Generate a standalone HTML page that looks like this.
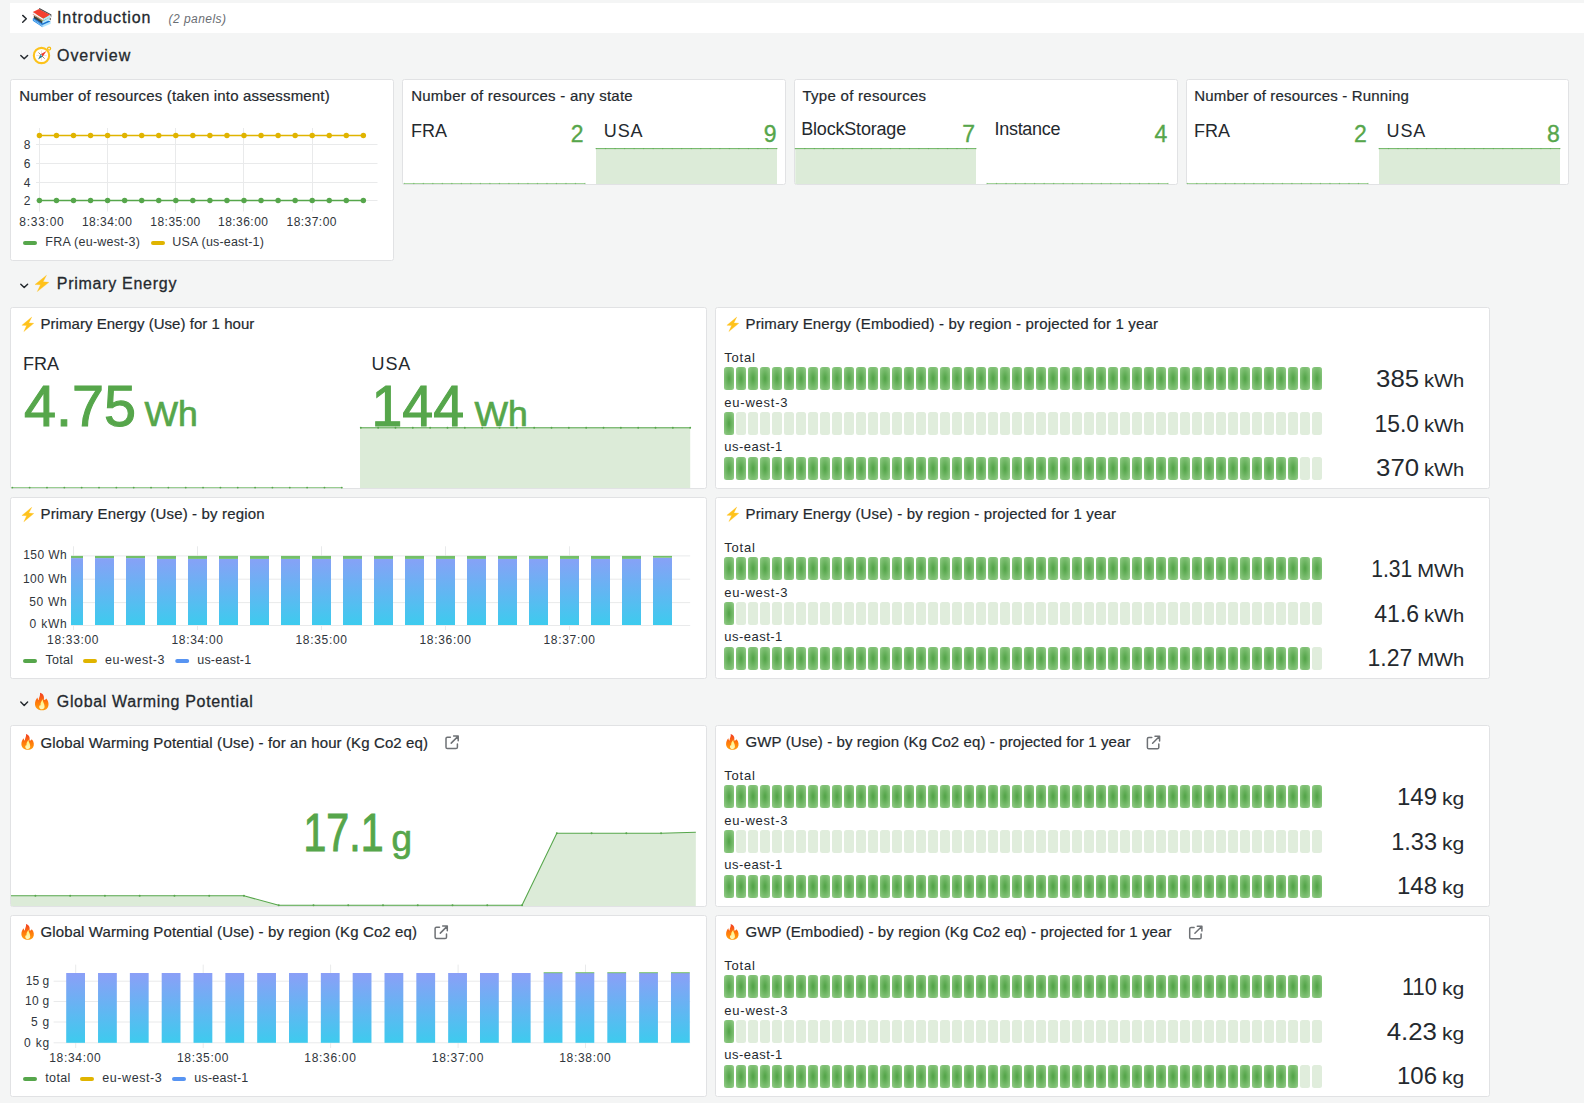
<!DOCTYPE html>
<html><head><meta charset="utf-8"><title>Dashboard</title>
<style>
html,body{margin:0;padding:0;background:#f4f5f5;width:1584px;height:1103px;overflow:hidden}
svg{display:block}
text{font-family:"Liberation Sans",sans-serif}
</style></head><body>
<svg width="1584" height="1103" viewBox="0 0 1584 1103">
<defs>
<linearGradient id="gbar" x1="0" y1="555" x2="0" y2="625" gradientUnits="userSpaceOnUse"><stop offset="0" stop-color="#8b9ff7"/><stop offset="1" stop-color="#3dcbee"/></linearGradient>
<linearGradient id="gbar2" x1="0" y1="973" x2="0" y2="1043" gradientUnits="userSpaceOnUse"><stop offset="0" stop-color="#8b9ff7"/><stop offset="1" stop-color="#3dcbee"/></linearGradient>
<radialGradient id="glit" cx="0.5" cy="0.5" r="0.6"><stop offset="0.1" stop-color="#56a64b"/><stop offset="1" stop-color="#8cc881"/></radialGradient>
<linearGradient id="gfire" x1="0" y1="0" x2="0" y2="1"><stop offset="0" stop-color="#f23d22"/><stop offset="0.55" stop-color="#ff7a0a"/><stop offset="1" stop-color="#ffa10f"/></linearGradient>
<linearGradient id="gflame" x1="0" y1="0" x2="0" y2="1"><stop offset="0" stop-color="#fff36e"/><stop offset="1" stop-color="#fff7c4"/></linearGradient>
<clipPath id="clipPE"><rect x="71" y="540" width="625" height="100"/></clipPath>
</defs>
<rect x="0" y="0" width="1584" height="1103" fill="#f4f5f5"/>
<rect x="10" y="3" width="1574" height="30" fill="#fff"/>
<path d="M22.7 15.4 L26.3 18.8 L22.7 22.2" fill="none" stroke="#24292e" stroke-width="1.45" stroke-linecap="round" stroke-linejoin="round"/>
<path d="M32.80 18.40 L42.60 24.90 L42.60 27.20 L32.80 20.70Z" fill="#1e88e5"/>
<path d="M33.40 19.40 L42.60 25.90 L42.60 26.40 L33.40 19.90Z" fill="#e3f2fd"/>
<path d="M42.60 24.90 L50.60 21.40 L50.60 23.70 L42.60 27.20Z" fill="#b3e5fc"/>
<path d="M32.80 18.40 L39.00 16.00 L50.60 21.40 L42.60 24.90Z" fill="#1976d2"/>
<path d="M33.80 15.60 L42.40 21.20 L42.40 23.50 L33.80 17.90Z" fill="#3d3d3d"/>
<path d="M42.40 21.20 L49.80 17.60 L49.80 19.90 L42.40 23.50Z" fill="#b3e5fc"/>
<path d="M33.80 15.60 L40.00 13.00 L49.80 17.60 L42.40 21.20Z" fill="#7cb342"/>
<path d="M49.80 17.60 L50.70 18.00 L50.70 20.30 L49.80 19.90Z" fill="#3d3d3d"/>
<path d="M32.80 12.10 L43.20 18.40 L43.20 20.70 L32.80 14.40Z" fill="#f5f5f5"/>
<path d="M32.80 13.90 L43.20 20.20 L43.20 20.70 L32.80 14.40Z" fill="#e53935"/>
<path d="M43.20 18.40 L50.20 14.80 L50.20 17.10 L43.20 20.70Z" fill="#b3e5fc"/>
<path d="M32.80 12.10 L39.00 9.00 L50.20 14.80 L43.20 18.40Z" fill="#f4402f"/>
<path d="M39.00 9.00 L39.40 8.10 L51.40 14.50 L51.20 17.40 L50.20 14.80Z" fill="#3d3d3d"/>
<text x="57" y="23" font-size="16" fill="#24292e" textLength="93.5" lengthAdjust="spacing" stroke="#24292e" stroke-width="0.3">Introduction</text>
<text x="168.5" y="23" font-size="12" fill="#6a6e73" font-style="italic" textLength="57.5" lengthAdjust="spacing">(2 panels)</text>
<path d="M20.8 55.4 L24.2 58.8 L27.6 55.4" fill="none" stroke="#24292e" stroke-width="1.45" stroke-linecap="round" stroke-linejoin="round"/>
<circle cx="49.1" cy="48.6" r="1.55" fill="none" stroke="#f7bc10" stroke-width="1.2"/>
<circle cx="41.5" cy="55.5" r="7.65" fill="#fff" stroke="#fcc21b" stroke-width="2.1"/>
<path d="M41.5 50.3 L41.5 60.7 M36.3 55.5 L46.7 55.5" stroke="#efd2bb" stroke-width="0.6"/>
<path d="M38.5 52.5 L44.7 58.7" stroke="#a88366" stroke-width="0.9"/>
<path d="M46.5 50.9 L42.7 56.4 L40.6 54.3 Z" fill="#f23a2a"/>
<path d="M38.1 59.5 L40.6 54.3 L42.7 56.4 Z" fill="#207a8f"/>
<circle cx="41.3" cy="55.4" r="0.8" fill="#8fd6ea"/>
<text x="57" y="60.6" font-size="16" fill="#24292e" textLength="73.2" lengthAdjust="spacing" stroke="#24292e" stroke-width="0.3">Overview</text>
<path d="M20.8 284.2 L24.2 287.59999999999997 L27.6 284.2" fill="none" stroke="#24292e" stroke-width="1.45" stroke-linecap="round" stroke-linejoin="round"/>
<path d="M46.50 275.30 L35.00 284.50 L40.50 284.80 L37.30 291.60 L48.90 282.30 L43.10 281.80Z" fill="#ffc21c" stroke="#ffbf10" stroke-width="0.3" stroke-linejoin="round"/>
<text x="56.8" y="289.4" font-size="16" fill="#24292e" textLength="119.6" lengthAdjust="spacing" stroke="#24292e" stroke-width="0.3">Primary Energy</text>
<path d="M20.8 702.1 L24.2 705.5 L27.6 702.1" fill="none" stroke="#24292e" stroke-width="1.45" stroke-linecap="round" stroke-linejoin="round"/>
<path d="M 40.00,692.80 C 43.50,693.77 44.50,696.69 43.80,699.90 C 44.60,700.19 45.60,699.80 46.20,698.54 C 48.60,700.97 49.30,705.05 47.60,707.77 C 46.40,709.72 44.30,710.30 42.00,710.30 C 38.50,710.30 35.30,708.36 35.00,704.47 C 34.80,701.55 36.00,699.12 37.40,697.47 C 37.60,698.63 37.90,699.61 38.60,700.19 C 38.80,697.47 40.60,695.52 40.00,692.80 Z" fill="url(#gfire)"/>
<path d="M 42.80,699.22 C 42.40,701.55 44.60,703.49 44.60,706.61 C 44.60,708.55 43.40,709.33 42.00,709.33 C 40.20,709.33 39.00,708.36 39.20,706.22 C 39.40,705.44 40.00,705.05 40.60,705.44 C 40.00,703.49 41.60,700.58 42.80,699.22 Z" fill="url(#gflame)"/>
<text x="56.8" y="707.3" font-size="16" fill="#24292e" textLength="196" lengthAdjust="spacing" stroke="#24292e" stroke-width="0.3">Global Warming Potential</text>
<rect x="10.5" y="79.5" width="383" height="181" rx="2" fill="#fff" stroke="#e1e2e4" stroke-width="1"/>
<text x="19.2" y="100.6" font-size="15" fill="#24292e" textLength="310.5" lengthAdjust="spacing" stroke="#24292e" stroke-width="0.2">Number of resources (taken into assessment)</text>
<line x1="36" y1="144.5" x2="377.5" y2="144.5" stroke="#e9eaeb" stroke-width="1"/>
<line x1="36" y1="163.5" x2="377.5" y2="163.5" stroke="#e9eaeb" stroke-width="1"/>
<line x1="36" y1="182.5" x2="377.5" y2="182.5" stroke="#e9eaeb" stroke-width="1"/>
<line x1="36" y1="200.5" x2="377.5" y2="200.5" stroke="#e9eaeb" stroke-width="1"/>
<line x1="39.5" y1="128" x2="39.5" y2="211.5" stroke="#e9eaeb" stroke-width="1"/>
<line x1="107.5" y1="128" x2="107.5" y2="211.5" stroke="#e9eaeb" stroke-width="1"/>
<line x1="175.5" y1="128" x2="175.5" y2="211.5" stroke="#e9eaeb" stroke-width="1"/>
<line x1="243.5" y1="128" x2="243.5" y2="211.5" stroke="#e9eaeb" stroke-width="1"/>
<line x1="312.5" y1="128" x2="312.5" y2="211.5" stroke="#e9eaeb" stroke-width="1"/>
<text x="30.5" y="148.70000000000002" font-size="12" fill="#30353b" text-anchor="end">8</text>
<text x="30.5" y="167.8" font-size="12" fill="#30353b" text-anchor="end">6</text>
<text x="30.5" y="186.60000000000002" font-size="12" fill="#30353b" text-anchor="end">4</text>
<text x="30.5" y="204.70000000000002" font-size="12" fill="#30353b" text-anchor="end">2</text>
<text x="19.3" y="225.7" font-size="12" fill="#30353b" textLength="44.5" lengthAdjust="spacing">8:33:00</text>
<text x="106.9" y="225.7" font-size="12" fill="#30353b" text-anchor="middle" textLength="50" lengthAdjust="spacing">18:34:00</text>
<text x="175.3" y="225.7" font-size="12" fill="#30353b" text-anchor="middle" textLength="50" lengthAdjust="spacing">18:35:00</text>
<text x="243.0" y="225.7" font-size="12" fill="#30353b" text-anchor="middle" textLength="50" lengthAdjust="spacing">18:36:00</text>
<text x="311.5" y="225.7" font-size="12" fill="#30353b" text-anchor="middle" textLength="50" lengthAdjust="spacing">18:37:00</text>
<line x1="39.4" y1="135.5" x2="363.5" y2="135.5" stroke="#e0b400" stroke-width="1.5"/>
<circle cx="39.40" cy="135.5" r="2.7" fill="#e0b400"/>
<circle cx="56.45" cy="135.5" r="2.7" fill="#e0b400"/>
<circle cx="73.50" cy="135.5" r="2.7" fill="#e0b400"/>
<circle cx="90.55" cy="135.5" r="2.7" fill="#e0b400"/>
<circle cx="107.60" cy="135.5" r="2.7" fill="#e0b400"/>
<circle cx="124.65" cy="135.5" r="2.7" fill="#e0b400"/>
<circle cx="141.70" cy="135.5" r="2.7" fill="#e0b400"/>
<circle cx="158.75" cy="135.5" r="2.7" fill="#e0b400"/>
<circle cx="175.80" cy="135.5" r="2.7" fill="#e0b400"/>
<circle cx="192.85" cy="135.5" r="2.7" fill="#e0b400"/>
<circle cx="209.90" cy="135.5" r="2.7" fill="#e0b400"/>
<circle cx="226.95" cy="135.5" r="2.7" fill="#e0b400"/>
<circle cx="244.00" cy="135.5" r="2.7" fill="#e0b400"/>
<circle cx="261.05" cy="135.5" r="2.7" fill="#e0b400"/>
<circle cx="278.10" cy="135.5" r="2.7" fill="#e0b400"/>
<circle cx="295.15" cy="135.5" r="2.7" fill="#e0b400"/>
<circle cx="312.20" cy="135.5" r="2.7" fill="#e0b400"/>
<circle cx="329.25" cy="135.5" r="2.7" fill="#e0b400"/>
<circle cx="346.30" cy="135.5" r="2.7" fill="#e0b400"/>
<circle cx="363.35" cy="135.5" r="2.7" fill="#e0b400"/>
<line x1="39.4" y1="200.5" x2="363.5" y2="200.5" stroke="#56a64b" stroke-width="1.5"/>
<circle cx="39.40" cy="200.5" r="2.7" fill="#56a64b"/>
<circle cx="56.45" cy="200.5" r="2.7" fill="#56a64b"/>
<circle cx="73.50" cy="200.5" r="2.7" fill="#56a64b"/>
<circle cx="90.55" cy="200.5" r="2.7" fill="#56a64b"/>
<circle cx="107.60" cy="200.5" r="2.7" fill="#56a64b"/>
<circle cx="124.65" cy="200.5" r="2.7" fill="#56a64b"/>
<circle cx="141.70" cy="200.5" r="2.7" fill="#56a64b"/>
<circle cx="158.75" cy="200.5" r="2.7" fill="#56a64b"/>
<circle cx="175.80" cy="200.5" r="2.7" fill="#56a64b"/>
<circle cx="192.85" cy="200.5" r="2.7" fill="#56a64b"/>
<circle cx="209.90" cy="200.5" r="2.7" fill="#56a64b"/>
<circle cx="226.95" cy="200.5" r="2.7" fill="#56a64b"/>
<circle cx="244.00" cy="200.5" r="2.7" fill="#56a64b"/>
<circle cx="261.05" cy="200.5" r="2.7" fill="#56a64b"/>
<circle cx="278.10" cy="200.5" r="2.7" fill="#56a64b"/>
<circle cx="295.15" cy="200.5" r="2.7" fill="#56a64b"/>
<circle cx="312.20" cy="200.5" r="2.7" fill="#56a64b"/>
<circle cx="329.25" cy="200.5" r="2.7" fill="#56a64b"/>
<circle cx="346.30" cy="200.5" r="2.7" fill="#56a64b"/>
<circle cx="363.35" cy="200.5" r="2.7" fill="#56a64b"/>
<rect x="23" y="241" width="14" height="4" fill="#56a64b" rx="2"/>
<text x="45.3" y="245.8" font-size="12.5" fill="#30353b" textLength="94.5" lengthAdjust="spacing">FRA (eu-west-3)</text>
<rect x="151" y="241" width="14" height="4" fill="#e0b400" rx="2"/>
<text x="172.3" y="245.8" font-size="12.5" fill="#30353b" textLength="91.5" lengthAdjust="spacing">USA (us-east-1)</text>
<rect x="402.5" y="79.5" width="383" height="105" rx="2" fill="#fff" stroke="#e1e2e4" stroke-width="1"/>
<text x="411.2" y="100.6" font-size="15" fill="#24292e" textLength="221.5" lengthAdjust="spacing" stroke="#24292e" stroke-width="0.2">Number of resources - any state</text>
<line x1="404.3" y1="183.5" x2="585" y2="183.5" stroke="#a3d39a" stroke-width="1"/>
<circle cx="404.30" cy="183.5" r="0.7" fill="#56a64b" fill-opacity="0.5"/>
<circle cx="413.81" cy="183.5" r="0.7" fill="#56a64b" fill-opacity="0.5"/>
<circle cx="423.32" cy="183.5" r="0.7" fill="#56a64b" fill-opacity="0.5"/>
<circle cx="432.83" cy="183.5" r="0.7" fill="#56a64b" fill-opacity="0.5"/>
<circle cx="442.34" cy="183.5" r="0.7" fill="#56a64b" fill-opacity="0.5"/>
<circle cx="451.85" cy="183.5" r="0.7" fill="#56a64b" fill-opacity="0.5"/>
<circle cx="461.36" cy="183.5" r="0.7" fill="#56a64b" fill-opacity="0.5"/>
<circle cx="470.87" cy="183.5" r="0.7" fill="#56a64b" fill-opacity="0.5"/>
<circle cx="480.38" cy="183.5" r="0.7" fill="#56a64b" fill-opacity="0.5"/>
<circle cx="489.89" cy="183.5" r="0.7" fill="#56a64b" fill-opacity="0.5"/>
<circle cx="499.41" cy="183.5" r="0.7" fill="#56a64b" fill-opacity="0.5"/>
<circle cx="508.92" cy="183.5" r="0.7" fill="#56a64b" fill-opacity="0.5"/>
<circle cx="518.43" cy="183.5" r="0.7" fill="#56a64b" fill-opacity="0.5"/>
<circle cx="527.94" cy="183.5" r="0.7" fill="#56a64b" fill-opacity="0.5"/>
<circle cx="537.45" cy="183.5" r="0.7" fill="#56a64b" fill-opacity="0.5"/>
<circle cx="546.96" cy="183.5" r="0.7" fill="#56a64b" fill-opacity="0.5"/>
<circle cx="556.47" cy="183.5" r="0.7" fill="#56a64b" fill-opacity="0.5"/>
<circle cx="565.98" cy="183.5" r="0.7" fill="#56a64b" fill-opacity="0.5"/>
<circle cx="575.49" cy="183.5" r="0.7" fill="#56a64b" fill-opacity="0.5"/>
<circle cx="585.00" cy="183.5" r="0.7" fill="#56a64b" fill-opacity="0.5"/>
<rect x="596" y="148.2" width="181" height="35.80000000000001" fill="#dcebd8"/>
<line x1="596" y1="148.6" x2="777" y2="148.6" stroke="#6fb565" stroke-width="1"/>
<circle cx="596.00" cy="148.6" r="0.7" fill="#56a64b" fill-opacity="0.6"/>
<circle cx="605.53" cy="148.6" r="0.7" fill="#56a64b" fill-opacity="0.6"/>
<circle cx="615.05" cy="148.6" r="0.7" fill="#56a64b" fill-opacity="0.6"/>
<circle cx="624.58" cy="148.6" r="0.7" fill="#56a64b" fill-opacity="0.6"/>
<circle cx="634.11" cy="148.6" r="0.7" fill="#56a64b" fill-opacity="0.6"/>
<circle cx="643.63" cy="148.6" r="0.7" fill="#56a64b" fill-opacity="0.6"/>
<circle cx="653.16" cy="148.6" r="0.7" fill="#56a64b" fill-opacity="0.6"/>
<circle cx="662.68" cy="148.6" r="0.7" fill="#56a64b" fill-opacity="0.6"/>
<circle cx="672.21" cy="148.6" r="0.7" fill="#56a64b" fill-opacity="0.6"/>
<circle cx="681.74" cy="148.6" r="0.7" fill="#56a64b" fill-opacity="0.6"/>
<circle cx="691.26" cy="148.6" r="0.7" fill="#56a64b" fill-opacity="0.6"/>
<circle cx="700.79" cy="148.6" r="0.7" fill="#56a64b" fill-opacity="0.6"/>
<circle cx="710.32" cy="148.6" r="0.7" fill="#56a64b" fill-opacity="0.6"/>
<circle cx="719.84" cy="148.6" r="0.7" fill="#56a64b" fill-opacity="0.6"/>
<circle cx="729.37" cy="148.6" r="0.7" fill="#56a64b" fill-opacity="0.6"/>
<circle cx="738.89" cy="148.6" r="0.7" fill="#56a64b" fill-opacity="0.6"/>
<circle cx="748.42" cy="148.6" r="0.7" fill="#56a64b" fill-opacity="0.6"/>
<circle cx="757.95" cy="148.6" r="0.7" fill="#56a64b" fill-opacity="0.6"/>
<circle cx="767.47" cy="148.6" r="0.7" fill="#56a64b" fill-opacity="0.6"/>
<circle cx="777.00" cy="148.6" r="0.7" fill="#56a64b" fill-opacity="0.6"/>
<text x="411.0" y="136.9" font-size="18" fill="#24292e">FRA</text>
<text x="583.5" y="142" font-size="23" fill="#56a64b" text-anchor="end" stroke="#56a64b" stroke-width="0.35">2</text>
<text x="603.8" y="136.9" font-size="18" fill="#24292e" textLength="38.8" lengthAdjust="spacing">USA</text>
<text x="776.5" y="142" font-size="23" fill="#56a64b" text-anchor="end" stroke="#56a64b" stroke-width="0.35">9</text>
<rect x="794.5" y="79.5" width="383" height="105" rx="2" fill="#fff" stroke="#e1e2e4" stroke-width="1"/>
<text x="802.5" y="100.6" font-size="15" fill="#24292e" textLength="123.5" lengthAdjust="spacing" stroke="#24292e" stroke-width="0.2">Type of resources</text>
<rect x="795.3" y="148.2" width="180.70000000000005" height="35.80000000000001" fill="#dcebd8"/>
<line x1="795.3" y1="148.6" x2="976" y2="148.6" stroke="#6fb565" stroke-width="1"/>
<circle cx="795.30" cy="148.6" r="0.7" fill="#56a64b" fill-opacity="0.6"/>
<circle cx="804.81" cy="148.6" r="0.7" fill="#56a64b" fill-opacity="0.6"/>
<circle cx="814.32" cy="148.6" r="0.7" fill="#56a64b" fill-opacity="0.6"/>
<circle cx="823.83" cy="148.6" r="0.7" fill="#56a64b" fill-opacity="0.6"/>
<circle cx="833.34" cy="148.6" r="0.7" fill="#56a64b" fill-opacity="0.6"/>
<circle cx="842.85" cy="148.6" r="0.7" fill="#56a64b" fill-opacity="0.6"/>
<circle cx="852.36" cy="148.6" r="0.7" fill="#56a64b" fill-opacity="0.6"/>
<circle cx="861.87" cy="148.6" r="0.7" fill="#56a64b" fill-opacity="0.6"/>
<circle cx="871.38" cy="148.6" r="0.7" fill="#56a64b" fill-opacity="0.6"/>
<circle cx="880.89" cy="148.6" r="0.7" fill="#56a64b" fill-opacity="0.6"/>
<circle cx="890.41" cy="148.6" r="0.7" fill="#56a64b" fill-opacity="0.6"/>
<circle cx="899.92" cy="148.6" r="0.7" fill="#56a64b" fill-opacity="0.6"/>
<circle cx="909.43" cy="148.6" r="0.7" fill="#56a64b" fill-opacity="0.6"/>
<circle cx="918.94" cy="148.6" r="0.7" fill="#56a64b" fill-opacity="0.6"/>
<circle cx="928.45" cy="148.6" r="0.7" fill="#56a64b" fill-opacity="0.6"/>
<circle cx="937.96" cy="148.6" r="0.7" fill="#56a64b" fill-opacity="0.6"/>
<circle cx="947.47" cy="148.6" r="0.7" fill="#56a64b" fill-opacity="0.6"/>
<circle cx="956.98" cy="148.6" r="0.7" fill="#56a64b" fill-opacity="0.6"/>
<circle cx="966.49" cy="148.6" r="0.7" fill="#56a64b" fill-opacity="0.6"/>
<circle cx="976.00" cy="148.6" r="0.7" fill="#56a64b" fill-opacity="0.6"/>
<line x1="987" y1="183.5" x2="1168" y2="183.5" stroke="#a3d39a" stroke-width="1"/>
<circle cx="987.00" cy="183.5" r="0.7" fill="#56a64b" fill-opacity="0.5"/>
<circle cx="996.53" cy="183.5" r="0.7" fill="#56a64b" fill-opacity="0.5"/>
<circle cx="1006.05" cy="183.5" r="0.7" fill="#56a64b" fill-opacity="0.5"/>
<circle cx="1015.58" cy="183.5" r="0.7" fill="#56a64b" fill-opacity="0.5"/>
<circle cx="1025.11" cy="183.5" r="0.7" fill="#56a64b" fill-opacity="0.5"/>
<circle cx="1034.63" cy="183.5" r="0.7" fill="#56a64b" fill-opacity="0.5"/>
<circle cx="1044.16" cy="183.5" r="0.7" fill="#56a64b" fill-opacity="0.5"/>
<circle cx="1053.68" cy="183.5" r="0.7" fill="#56a64b" fill-opacity="0.5"/>
<circle cx="1063.21" cy="183.5" r="0.7" fill="#56a64b" fill-opacity="0.5"/>
<circle cx="1072.74" cy="183.5" r="0.7" fill="#56a64b" fill-opacity="0.5"/>
<circle cx="1082.26" cy="183.5" r="0.7" fill="#56a64b" fill-opacity="0.5"/>
<circle cx="1091.79" cy="183.5" r="0.7" fill="#56a64b" fill-opacity="0.5"/>
<circle cx="1101.32" cy="183.5" r="0.7" fill="#56a64b" fill-opacity="0.5"/>
<circle cx="1110.84" cy="183.5" r="0.7" fill="#56a64b" fill-opacity="0.5"/>
<circle cx="1120.37" cy="183.5" r="0.7" fill="#56a64b" fill-opacity="0.5"/>
<circle cx="1129.89" cy="183.5" r="0.7" fill="#56a64b" fill-opacity="0.5"/>
<circle cx="1139.42" cy="183.5" r="0.7" fill="#56a64b" fill-opacity="0.5"/>
<circle cx="1148.95" cy="183.5" r="0.7" fill="#56a64b" fill-opacity="0.5"/>
<circle cx="1158.47" cy="183.5" r="0.7" fill="#56a64b" fill-opacity="0.5"/>
<circle cx="1168.00" cy="183.5" r="0.7" fill="#56a64b" fill-opacity="0.5"/>
<text x="801.2" y="135" font-size="18" fill="#24292e" textLength="105" lengthAdjust="spacing">BlockStorage</text>
<text x="975" y="142" font-size="23" fill="#56a64b" text-anchor="end" stroke="#56a64b" stroke-width="0.35">7</text>
<text x="994.5" y="135" font-size="18" fill="#24292e" textLength="66" lengthAdjust="spacing">Instance</text>
<text x="1167.3" y="142" font-size="23" fill="#56a64b" text-anchor="end" stroke="#56a64b" stroke-width="0.35">4</text>
<rect x="1186.5" y="79.5" width="382" height="105" rx="2" fill="#fff" stroke="#e1e2e4" stroke-width="1"/>
<text x="1194.3" y="100.6" font-size="15" fill="#24292e" textLength="214.5" lengthAdjust="spacing" stroke="#24292e" stroke-width="0.2">Number of resources - Running</text>
<line x1="1187.3" y1="183.5" x2="1368" y2="183.5" stroke="#a3d39a" stroke-width="1"/>
<circle cx="1187.30" cy="183.5" r="0.7" fill="#56a64b" fill-opacity="0.5"/>
<circle cx="1196.81" cy="183.5" r="0.7" fill="#56a64b" fill-opacity="0.5"/>
<circle cx="1206.32" cy="183.5" r="0.7" fill="#56a64b" fill-opacity="0.5"/>
<circle cx="1215.83" cy="183.5" r="0.7" fill="#56a64b" fill-opacity="0.5"/>
<circle cx="1225.34" cy="183.5" r="0.7" fill="#56a64b" fill-opacity="0.5"/>
<circle cx="1234.85" cy="183.5" r="0.7" fill="#56a64b" fill-opacity="0.5"/>
<circle cx="1244.36" cy="183.5" r="0.7" fill="#56a64b" fill-opacity="0.5"/>
<circle cx="1253.87" cy="183.5" r="0.7" fill="#56a64b" fill-opacity="0.5"/>
<circle cx="1263.38" cy="183.5" r="0.7" fill="#56a64b" fill-opacity="0.5"/>
<circle cx="1272.89" cy="183.5" r="0.7" fill="#56a64b" fill-opacity="0.5"/>
<circle cx="1282.41" cy="183.5" r="0.7" fill="#56a64b" fill-opacity="0.5"/>
<circle cx="1291.92" cy="183.5" r="0.7" fill="#56a64b" fill-opacity="0.5"/>
<circle cx="1301.43" cy="183.5" r="0.7" fill="#56a64b" fill-opacity="0.5"/>
<circle cx="1310.94" cy="183.5" r="0.7" fill="#56a64b" fill-opacity="0.5"/>
<circle cx="1320.45" cy="183.5" r="0.7" fill="#56a64b" fill-opacity="0.5"/>
<circle cx="1329.96" cy="183.5" r="0.7" fill="#56a64b" fill-opacity="0.5"/>
<circle cx="1339.47" cy="183.5" r="0.7" fill="#56a64b" fill-opacity="0.5"/>
<circle cx="1348.98" cy="183.5" r="0.7" fill="#56a64b" fill-opacity="0.5"/>
<circle cx="1358.49" cy="183.5" r="0.7" fill="#56a64b" fill-opacity="0.5"/>
<circle cx="1368.00" cy="183.5" r="0.7" fill="#56a64b" fill-opacity="0.5"/>
<rect x="1379" y="148.2" width="181" height="35.80000000000001" fill="#dcebd8"/>
<line x1="1379" y1="148.6" x2="1560" y2="148.6" stroke="#6fb565" stroke-width="1"/>
<circle cx="1379.00" cy="148.6" r="0.7" fill="#56a64b" fill-opacity="0.6"/>
<circle cx="1388.53" cy="148.6" r="0.7" fill="#56a64b" fill-opacity="0.6"/>
<circle cx="1398.05" cy="148.6" r="0.7" fill="#56a64b" fill-opacity="0.6"/>
<circle cx="1407.58" cy="148.6" r="0.7" fill="#56a64b" fill-opacity="0.6"/>
<circle cx="1417.11" cy="148.6" r="0.7" fill="#56a64b" fill-opacity="0.6"/>
<circle cx="1426.63" cy="148.6" r="0.7" fill="#56a64b" fill-opacity="0.6"/>
<circle cx="1436.16" cy="148.6" r="0.7" fill="#56a64b" fill-opacity="0.6"/>
<circle cx="1445.68" cy="148.6" r="0.7" fill="#56a64b" fill-opacity="0.6"/>
<circle cx="1455.21" cy="148.6" r="0.7" fill="#56a64b" fill-opacity="0.6"/>
<circle cx="1464.74" cy="148.6" r="0.7" fill="#56a64b" fill-opacity="0.6"/>
<circle cx="1474.26" cy="148.6" r="0.7" fill="#56a64b" fill-opacity="0.6"/>
<circle cx="1483.79" cy="148.6" r="0.7" fill="#56a64b" fill-opacity="0.6"/>
<circle cx="1493.32" cy="148.6" r="0.7" fill="#56a64b" fill-opacity="0.6"/>
<circle cx="1502.84" cy="148.6" r="0.7" fill="#56a64b" fill-opacity="0.6"/>
<circle cx="1512.37" cy="148.6" r="0.7" fill="#56a64b" fill-opacity="0.6"/>
<circle cx="1521.89" cy="148.6" r="0.7" fill="#56a64b" fill-opacity="0.6"/>
<circle cx="1531.42" cy="148.6" r="0.7" fill="#56a64b" fill-opacity="0.6"/>
<circle cx="1540.95" cy="148.6" r="0.7" fill="#56a64b" fill-opacity="0.6"/>
<circle cx="1550.47" cy="148.6" r="0.7" fill="#56a64b" fill-opacity="0.6"/>
<circle cx="1560.00" cy="148.6" r="0.7" fill="#56a64b" fill-opacity="0.6"/>
<text x="1194.0" y="136.9" font-size="18" fill="#24292e">FRA</text>
<text x="1366.7" y="142" font-size="23" fill="#56a64b" text-anchor="end" stroke="#56a64b" stroke-width="0.35">2</text>
<text x="1386.5" y="136.9" font-size="18" fill="#24292e" textLength="38.8" lengthAdjust="spacing">USA</text>
<text x="1559.8" y="142" font-size="23" fill="#56a64b" text-anchor="end" stroke="#56a64b" stroke-width="0.35">8</text>
<rect x="10.5" y="307.5" width="696" height="181" rx="2" fill="#fff" stroke="#e1e2e4" stroke-width="1"/>
<path d="M31.75 317.10 L21.90 325.28 L26.61 325.55 L23.87 331.60 L33.80 323.33 L28.83 322.88Z" fill="#ffc21c" stroke="#ffbf10" stroke-width="0.3" stroke-linejoin="round"/>
<text x="40.5" y="329" font-size="15" fill="#24292e" textLength="213.8" lengthAdjust="spacing" stroke="#24292e" stroke-width="0.2">Primary Energy (Use) for 1 hour</text>
<text x="22.9" y="370.3" font-size="18" fill="#24292e">FRA</text>
<text x="24" y="426" font-size="57" fill="#56a64b" textLength="112" lengthAdjust="spacingAndGlyphs" stroke="#56a64b" stroke-width="1.1">4.75</text>
<text x="144.5" y="426" font-size="35" fill="#56a64b" textLength="53.3" lengthAdjust="spacingAndGlyphs" stroke="#56a64b" stroke-width="0.7">Wh</text>
<line x1="12.3" y1="487.6" x2="341.8" y2="487.6" stroke="#8fc886" stroke-width="1"/>
<circle cx="12.30" cy="487.6" r="0.95" fill="#56a64b" fill-opacity="1"/>
<circle cx="29.64" cy="487.6" r="0.95" fill="#56a64b" fill-opacity="1"/>
<circle cx="46.98" cy="487.6" r="0.95" fill="#56a64b" fill-opacity="1"/>
<circle cx="64.33" cy="487.6" r="0.95" fill="#56a64b" fill-opacity="1"/>
<circle cx="81.67" cy="487.6" r="0.95" fill="#56a64b" fill-opacity="1"/>
<circle cx="99.01" cy="487.6" r="0.95" fill="#56a64b" fill-opacity="1"/>
<circle cx="116.35" cy="487.6" r="0.95" fill="#56a64b" fill-opacity="1"/>
<circle cx="133.69" cy="487.6" r="0.95" fill="#56a64b" fill-opacity="1"/>
<circle cx="151.04" cy="487.6" r="0.95" fill="#56a64b" fill-opacity="1"/>
<circle cx="168.38" cy="487.6" r="0.95" fill="#56a64b" fill-opacity="1"/>
<circle cx="185.72" cy="487.6" r="0.95" fill="#56a64b" fill-opacity="1"/>
<circle cx="203.06" cy="487.6" r="0.95" fill="#56a64b" fill-opacity="1"/>
<circle cx="220.41" cy="487.6" r="0.95" fill="#56a64b" fill-opacity="1"/>
<circle cx="237.75" cy="487.6" r="0.95" fill="#56a64b" fill-opacity="1"/>
<circle cx="255.09" cy="487.6" r="0.95" fill="#56a64b" fill-opacity="1"/>
<circle cx="272.43" cy="487.6" r="0.95" fill="#56a64b" fill-opacity="1"/>
<circle cx="289.77" cy="487.6" r="0.95" fill="#56a64b" fill-opacity="1"/>
<circle cx="307.12" cy="487.6" r="0.95" fill="#56a64b" fill-opacity="1"/>
<circle cx="324.46" cy="487.6" r="0.95" fill="#56a64b" fill-opacity="1"/>
<circle cx="341.80" cy="487.6" r="0.95" fill="#56a64b" fill-opacity="1"/>
<rect x="360" y="427.3" width="330.2" height="60.69999999999999" fill="#dcebd8"/>
<line x1="360.8" y1="427.8" x2="690.2" y2="427.8" stroke="#56a64b" stroke-width="1"/>
<circle cx="360.80" cy="427.8" r="0.95" fill="#56a64b" fill-opacity="1"/>
<circle cx="378.14" cy="427.8" r="0.95" fill="#56a64b" fill-opacity="1"/>
<circle cx="395.47" cy="427.8" r="0.95" fill="#56a64b" fill-opacity="1"/>
<circle cx="412.81" cy="427.8" r="0.95" fill="#56a64b" fill-opacity="1"/>
<circle cx="430.15" cy="427.8" r="0.95" fill="#56a64b" fill-opacity="1"/>
<circle cx="447.48" cy="427.8" r="0.95" fill="#56a64b" fill-opacity="1"/>
<circle cx="464.82" cy="427.8" r="0.95" fill="#56a64b" fill-opacity="1"/>
<circle cx="482.16" cy="427.8" r="0.95" fill="#56a64b" fill-opacity="1"/>
<circle cx="499.49" cy="427.8" r="0.95" fill="#56a64b" fill-opacity="1"/>
<circle cx="516.83" cy="427.8" r="0.95" fill="#56a64b" fill-opacity="1"/>
<circle cx="534.17" cy="427.8" r="0.95" fill="#56a64b" fill-opacity="1"/>
<circle cx="551.51" cy="427.8" r="0.95" fill="#56a64b" fill-opacity="1"/>
<circle cx="568.84" cy="427.8" r="0.95" fill="#56a64b" fill-opacity="1"/>
<circle cx="586.18" cy="427.8" r="0.95" fill="#56a64b" fill-opacity="1"/>
<circle cx="603.52" cy="427.8" r="0.95" fill="#56a64b" fill-opacity="1"/>
<circle cx="620.85" cy="427.8" r="0.95" fill="#56a64b" fill-opacity="1"/>
<circle cx="638.19" cy="427.8" r="0.95" fill="#56a64b" fill-opacity="1"/>
<circle cx="655.53" cy="427.8" r="0.95" fill="#56a64b" fill-opacity="1"/>
<circle cx="672.86" cy="427.8" r="0.95" fill="#56a64b" fill-opacity="1"/>
<circle cx="690.20" cy="427.8" r="0.95" fill="#56a64b" fill-opacity="1"/>
<text x="371.5" y="370" font-size="18" fill="#24292e" textLength="38.8" lengthAdjust="spacing">USA</text>
<text x="371.5" y="425.5" font-size="57" fill="#56a64b" textLength="92.5" lengthAdjust="spacingAndGlyphs" stroke="#56a64b" stroke-width="1.1">144</text>
<text x="474.5" y="425.5" font-size="35" fill="#56a64b" textLength="53.3" lengthAdjust="spacingAndGlyphs" stroke="#56a64b" stroke-width="0.7">Wh</text>
<rect x="715.5" y="307.5" width="774" height="181" rx="2" fill="#fff" stroke="#e1e2e4" stroke-width="1"/>
<path d="M736.75 317.10 L726.90 325.28 L731.61 325.55 L728.87 331.60 L738.80 323.33 L733.83 322.88Z" fill="#ffc21c" stroke="#ffbf10" stroke-width="0.3" stroke-linejoin="round"/>
<text x="745.5" y="329" font-size="15" fill="#24292e" textLength="412.5" lengthAdjust="spacing" stroke="#24292e" stroke-width="0.2">Primary Energy (Embodied) - by region - projected for 1 year</text>
<text x="724.3" y="362.0" font-size="13" fill="#24292e" textLength="30.5" lengthAdjust="spacing">Total</text>
<rect x="724" y="367" width="10" height="23" rx="2.5" fill="url(#glit)"/>
<rect x="736" y="367" width="10" height="23" rx="2.5" fill="url(#glit)"/>
<rect x="748" y="367" width="10" height="23" rx="2.5" fill="url(#glit)"/>
<rect x="760" y="367" width="10" height="23" rx="2.5" fill="url(#glit)"/>
<rect x="772" y="367" width="10" height="23" rx="2.5" fill="url(#glit)"/>
<rect x="784" y="367" width="10" height="23" rx="2.5" fill="url(#glit)"/>
<rect x="796" y="367" width="10" height="23" rx="2.5" fill="url(#glit)"/>
<rect x="808" y="367" width="10" height="23" rx="2.5" fill="url(#glit)"/>
<rect x="820" y="367" width="10" height="23" rx="2.5" fill="url(#glit)"/>
<rect x="832" y="367" width="10" height="23" rx="2.5" fill="url(#glit)"/>
<rect x="844" y="367" width="10" height="23" rx="2.5" fill="url(#glit)"/>
<rect x="856" y="367" width="10" height="23" rx="2.5" fill="url(#glit)"/>
<rect x="868" y="367" width="10" height="23" rx="2.5" fill="url(#glit)"/>
<rect x="880" y="367" width="10" height="23" rx="2.5" fill="url(#glit)"/>
<rect x="892" y="367" width="10" height="23" rx="2.5" fill="url(#glit)"/>
<rect x="904" y="367" width="10" height="23" rx="2.5" fill="url(#glit)"/>
<rect x="916" y="367" width="10" height="23" rx="2.5" fill="url(#glit)"/>
<rect x="928" y="367" width="10" height="23" rx="2.5" fill="url(#glit)"/>
<rect x="940" y="367" width="10" height="23" rx="2.5" fill="url(#glit)"/>
<rect x="952" y="367" width="10" height="23" rx="2.5" fill="url(#glit)"/>
<rect x="964" y="367" width="10" height="23" rx="2.5" fill="url(#glit)"/>
<rect x="976" y="367" width="10" height="23" rx="2.5" fill="url(#glit)"/>
<rect x="988" y="367" width="10" height="23" rx="2.5" fill="url(#glit)"/>
<rect x="1000" y="367" width="10" height="23" rx="2.5" fill="url(#glit)"/>
<rect x="1012" y="367" width="10" height="23" rx="2.5" fill="url(#glit)"/>
<rect x="1024" y="367" width="10" height="23" rx="2.5" fill="url(#glit)"/>
<rect x="1036" y="367" width="10" height="23" rx="2.5" fill="url(#glit)"/>
<rect x="1048" y="367" width="10" height="23" rx="2.5" fill="url(#glit)"/>
<rect x="1060" y="367" width="10" height="23" rx="2.5" fill="url(#glit)"/>
<rect x="1072" y="367" width="10" height="23" rx="2.5" fill="url(#glit)"/>
<rect x="1084" y="367" width="10" height="23" rx="2.5" fill="url(#glit)"/>
<rect x="1096" y="367" width="10" height="23" rx="2.5" fill="url(#glit)"/>
<rect x="1108" y="367" width="10" height="23" rx="2.5" fill="url(#glit)"/>
<rect x="1120" y="367" width="10" height="23" rx="2.5" fill="url(#glit)"/>
<rect x="1132" y="367" width="10" height="23" rx="2.5" fill="url(#glit)"/>
<rect x="1144" y="367" width="10" height="23" rx="2.5" fill="url(#glit)"/>
<rect x="1156" y="367" width="10" height="23" rx="2.5" fill="url(#glit)"/>
<rect x="1168" y="367" width="10" height="23" rx="2.5" fill="url(#glit)"/>
<rect x="1180" y="367" width="10" height="23" rx="2.5" fill="url(#glit)"/>
<rect x="1192" y="367" width="10" height="23" rx="2.5" fill="url(#glit)"/>
<rect x="1204" y="367" width="10" height="23" rx="2.5" fill="url(#glit)"/>
<rect x="1216" y="367" width="10" height="23" rx="2.5" fill="url(#glit)"/>
<rect x="1228" y="367" width="10" height="23" rx="2.5" fill="url(#glit)"/>
<rect x="1240" y="367" width="10" height="23" rx="2.5" fill="url(#glit)"/>
<rect x="1252" y="367" width="10" height="23" rx="2.5" fill="url(#glit)"/>
<rect x="1264" y="367" width="10" height="23" rx="2.5" fill="url(#glit)"/>
<rect x="1276" y="367" width="10" height="23" rx="2.5" fill="url(#glit)"/>
<rect x="1288" y="367" width="10" height="23" rx="2.5" fill="url(#glit)"/>
<rect x="1300" y="367" width="10" height="23" rx="2.5" fill="url(#glit)"/>
<rect x="1312" y="367" width="10" height="23" rx="2.5" fill="url(#glit)"/>
<text x="1464.3" y="387.0" font-size="19" fill="#24292e" text-anchor="end" textLength="40.300000000000004" lengthAdjust="spacingAndGlyphs">kWh</text>
<text x="1419.1" y="387.0" font-size="23.5" fill="#24292e" text-anchor="end" textLength="43" lengthAdjust="spacingAndGlyphs">385</text>
<text x="724.3" y="406.5" font-size="13" fill="#24292e" textLength="63.3" lengthAdjust="spacing">eu-west-3</text>
<rect x="724" y="412" width="10" height="23" rx="2.5" fill="url(#glit)"/>
<rect x="736" y="412" width="10" height="23" rx="2.5" fill="#e0eddc"/>
<rect x="748" y="412" width="10" height="23" rx="2.5" fill="#e0eddc"/>
<rect x="760" y="412" width="10" height="23" rx="2.5" fill="#e0eddc"/>
<rect x="772" y="412" width="10" height="23" rx="2.5" fill="#e0eddc"/>
<rect x="784" y="412" width="10" height="23" rx="2.5" fill="#e0eddc"/>
<rect x="796" y="412" width="10" height="23" rx="2.5" fill="#e0eddc"/>
<rect x="808" y="412" width="10" height="23" rx="2.5" fill="#e0eddc"/>
<rect x="820" y="412" width="10" height="23" rx="2.5" fill="#e0eddc"/>
<rect x="832" y="412" width="10" height="23" rx="2.5" fill="#e0eddc"/>
<rect x="844" y="412" width="10" height="23" rx="2.5" fill="#e0eddc"/>
<rect x="856" y="412" width="10" height="23" rx="2.5" fill="#e0eddc"/>
<rect x="868" y="412" width="10" height="23" rx="2.5" fill="#e0eddc"/>
<rect x="880" y="412" width="10" height="23" rx="2.5" fill="#e0eddc"/>
<rect x="892" y="412" width="10" height="23" rx="2.5" fill="#e0eddc"/>
<rect x="904" y="412" width="10" height="23" rx="2.5" fill="#e0eddc"/>
<rect x="916" y="412" width="10" height="23" rx="2.5" fill="#e0eddc"/>
<rect x="928" y="412" width="10" height="23" rx="2.5" fill="#e0eddc"/>
<rect x="940" y="412" width="10" height="23" rx="2.5" fill="#e0eddc"/>
<rect x="952" y="412" width="10" height="23" rx="2.5" fill="#e0eddc"/>
<rect x="964" y="412" width="10" height="23" rx="2.5" fill="#e0eddc"/>
<rect x="976" y="412" width="10" height="23" rx="2.5" fill="#e0eddc"/>
<rect x="988" y="412" width="10" height="23" rx="2.5" fill="#e0eddc"/>
<rect x="1000" y="412" width="10" height="23" rx="2.5" fill="#e0eddc"/>
<rect x="1012" y="412" width="10" height="23" rx="2.5" fill="#e0eddc"/>
<rect x="1024" y="412" width="10" height="23" rx="2.5" fill="#e0eddc"/>
<rect x="1036" y="412" width="10" height="23" rx="2.5" fill="#e0eddc"/>
<rect x="1048" y="412" width="10" height="23" rx="2.5" fill="#e0eddc"/>
<rect x="1060" y="412" width="10" height="23" rx="2.5" fill="#e0eddc"/>
<rect x="1072" y="412" width="10" height="23" rx="2.5" fill="#e0eddc"/>
<rect x="1084" y="412" width="10" height="23" rx="2.5" fill="#e0eddc"/>
<rect x="1096" y="412" width="10" height="23" rx="2.5" fill="#e0eddc"/>
<rect x="1108" y="412" width="10" height="23" rx="2.5" fill="#e0eddc"/>
<rect x="1120" y="412" width="10" height="23" rx="2.5" fill="#e0eddc"/>
<rect x="1132" y="412" width="10" height="23" rx="2.5" fill="#e0eddc"/>
<rect x="1144" y="412" width="10" height="23" rx="2.5" fill="#e0eddc"/>
<rect x="1156" y="412" width="10" height="23" rx="2.5" fill="#e0eddc"/>
<rect x="1168" y="412" width="10" height="23" rx="2.5" fill="#e0eddc"/>
<rect x="1180" y="412" width="10" height="23" rx="2.5" fill="#e0eddc"/>
<rect x="1192" y="412" width="10" height="23" rx="2.5" fill="#e0eddc"/>
<rect x="1204" y="412" width="10" height="23" rx="2.5" fill="#e0eddc"/>
<rect x="1216" y="412" width="10" height="23" rx="2.5" fill="#e0eddc"/>
<rect x="1228" y="412" width="10" height="23" rx="2.5" fill="#e0eddc"/>
<rect x="1240" y="412" width="10" height="23" rx="2.5" fill="#e0eddc"/>
<rect x="1252" y="412" width="10" height="23" rx="2.5" fill="#e0eddc"/>
<rect x="1264" y="412" width="10" height="23" rx="2.5" fill="#e0eddc"/>
<rect x="1276" y="412" width="10" height="23" rx="2.5" fill="#e0eddc"/>
<rect x="1288" y="412" width="10" height="23" rx="2.5" fill="#e0eddc"/>
<rect x="1300" y="412" width="10" height="23" rx="2.5" fill="#e0eddc"/>
<rect x="1312" y="412" width="10" height="23" rx="2.5" fill="#e0eddc"/>
<text x="1464.3" y="431.5" font-size="19" fill="#24292e" text-anchor="end" textLength="40.300000000000004" lengthAdjust="spacingAndGlyphs">kWh</text>
<text x="1419.1" y="431.5" font-size="23.5" fill="#24292e" text-anchor="end" textLength="44.5" lengthAdjust="spacingAndGlyphs">15.0</text>
<text x="724.3" y="451.0" font-size="13" fill="#24292e" textLength="58" lengthAdjust="spacing">us-east-1</text>
<rect x="724" y="457" width="10" height="23" rx="2.5" fill="url(#glit)"/>
<rect x="736" y="457" width="10" height="23" rx="2.5" fill="url(#glit)"/>
<rect x="748" y="457" width="10" height="23" rx="2.5" fill="url(#glit)"/>
<rect x="760" y="457" width="10" height="23" rx="2.5" fill="url(#glit)"/>
<rect x="772" y="457" width="10" height="23" rx="2.5" fill="url(#glit)"/>
<rect x="784" y="457" width="10" height="23" rx="2.5" fill="url(#glit)"/>
<rect x="796" y="457" width="10" height="23" rx="2.5" fill="url(#glit)"/>
<rect x="808" y="457" width="10" height="23" rx="2.5" fill="url(#glit)"/>
<rect x="820" y="457" width="10" height="23" rx="2.5" fill="url(#glit)"/>
<rect x="832" y="457" width="10" height="23" rx="2.5" fill="url(#glit)"/>
<rect x="844" y="457" width="10" height="23" rx="2.5" fill="url(#glit)"/>
<rect x="856" y="457" width="10" height="23" rx="2.5" fill="url(#glit)"/>
<rect x="868" y="457" width="10" height="23" rx="2.5" fill="url(#glit)"/>
<rect x="880" y="457" width="10" height="23" rx="2.5" fill="url(#glit)"/>
<rect x="892" y="457" width="10" height="23" rx="2.5" fill="url(#glit)"/>
<rect x="904" y="457" width="10" height="23" rx="2.5" fill="url(#glit)"/>
<rect x="916" y="457" width="10" height="23" rx="2.5" fill="url(#glit)"/>
<rect x="928" y="457" width="10" height="23" rx="2.5" fill="url(#glit)"/>
<rect x="940" y="457" width="10" height="23" rx="2.5" fill="url(#glit)"/>
<rect x="952" y="457" width="10" height="23" rx="2.5" fill="url(#glit)"/>
<rect x="964" y="457" width="10" height="23" rx="2.5" fill="url(#glit)"/>
<rect x="976" y="457" width="10" height="23" rx="2.5" fill="url(#glit)"/>
<rect x="988" y="457" width="10" height="23" rx="2.5" fill="url(#glit)"/>
<rect x="1000" y="457" width="10" height="23" rx="2.5" fill="url(#glit)"/>
<rect x="1012" y="457" width="10" height="23" rx="2.5" fill="url(#glit)"/>
<rect x="1024" y="457" width="10" height="23" rx="2.5" fill="url(#glit)"/>
<rect x="1036" y="457" width="10" height="23" rx="2.5" fill="url(#glit)"/>
<rect x="1048" y="457" width="10" height="23" rx="2.5" fill="url(#glit)"/>
<rect x="1060" y="457" width="10" height="23" rx="2.5" fill="url(#glit)"/>
<rect x="1072" y="457" width="10" height="23" rx="2.5" fill="url(#glit)"/>
<rect x="1084" y="457" width="10" height="23" rx="2.5" fill="url(#glit)"/>
<rect x="1096" y="457" width="10" height="23" rx="2.5" fill="url(#glit)"/>
<rect x="1108" y="457" width="10" height="23" rx="2.5" fill="url(#glit)"/>
<rect x="1120" y="457" width="10" height="23" rx="2.5" fill="url(#glit)"/>
<rect x="1132" y="457" width="10" height="23" rx="2.5" fill="url(#glit)"/>
<rect x="1144" y="457" width="10" height="23" rx="2.5" fill="url(#glit)"/>
<rect x="1156" y="457" width="10" height="23" rx="2.5" fill="url(#glit)"/>
<rect x="1168" y="457" width="10" height="23" rx="2.5" fill="url(#glit)"/>
<rect x="1180" y="457" width="10" height="23" rx="2.5" fill="url(#glit)"/>
<rect x="1192" y="457" width="10" height="23" rx="2.5" fill="url(#glit)"/>
<rect x="1204" y="457" width="10" height="23" rx="2.5" fill="url(#glit)"/>
<rect x="1216" y="457" width="10" height="23" rx="2.5" fill="url(#glit)"/>
<rect x="1228" y="457" width="10" height="23" rx="2.5" fill="url(#glit)"/>
<rect x="1240" y="457" width="10" height="23" rx="2.5" fill="url(#glit)"/>
<rect x="1252" y="457" width="10" height="23" rx="2.5" fill="url(#glit)"/>
<rect x="1264" y="457" width="10" height="23" rx="2.5" fill="url(#glit)"/>
<rect x="1276" y="457" width="10" height="23" rx="2.5" fill="url(#glit)"/>
<rect x="1288" y="457" width="10" height="23" rx="2.5" fill="url(#glit)"/>
<rect x="1300" y="457" width="10" height="23" rx="2.5" fill="#e0eddc"/>
<rect x="1312" y="457" width="10" height="23" rx="2.5" fill="#e0eddc"/>
<text x="1464.3" y="476.0" font-size="19" fill="#24292e" text-anchor="end" textLength="40.300000000000004" lengthAdjust="spacingAndGlyphs">kWh</text>
<text x="1419.1" y="476.0" font-size="23.5" fill="#24292e" text-anchor="end" textLength="43" lengthAdjust="spacingAndGlyphs">370</text>
<rect x="10.5" y="497.5" width="696" height="181" rx="2" fill="#fff" stroke="#e1e2e4" stroke-width="1"/>
<path d="M31.75 507.30 L21.90 515.48 L26.61 515.75 L23.87 521.80 L33.80 513.53 L28.83 513.08Z" fill="#ffc21c" stroke="#ffbf10" stroke-width="0.3" stroke-linejoin="round"/>
<text x="40.5" y="519.3" font-size="15" fill="#24292e" textLength="224" lengthAdjust="spacing" stroke="#24292e" stroke-width="0.2">Primary Energy (Use) - by region</text>
<line x1="70.8" y1="555.9" x2="690.2" y2="555.9" stroke="#e9eaeb" stroke-width="1"/>
<line x1="70.8" y1="579.2" x2="690.2" y2="579.2" stroke="#e9eaeb" stroke-width="1"/>
<line x1="70.8" y1="602.6" x2="690.2" y2="602.6" stroke="#e9eaeb" stroke-width="1"/>
<line x1="70.8" y1="625.5" x2="690.2" y2="625.5" stroke="#e9eaeb" stroke-width="1"/>
<line x1="73.5" y1="546.3" x2="73.5" y2="630" stroke="#e9eaeb" stroke-width="1"/>
<line x1="197.5" y1="546.3" x2="197.5" y2="630" stroke="#e9eaeb" stroke-width="1"/>
<line x1="321.5" y1="546.3" x2="321.5" y2="630" stroke="#e9eaeb" stroke-width="1"/>
<line x1="445.5" y1="546.3" x2="445.5" y2="630" stroke="#e9eaeb" stroke-width="1"/>
<line x1="569.5" y1="546.3" x2="569.5" y2="630" stroke="#e9eaeb" stroke-width="1"/>
<text x="66.8" y="559.0" font-size="12" fill="#30353b" text-anchor="end" textLength="43.6" lengthAdjust="spacing">150 Wh</text>
<text x="66.8" y="582.6" font-size="12" fill="#30353b" text-anchor="end" textLength="43.9" lengthAdjust="spacing">100 Wh</text>
<text x="66.8" y="605.8" font-size="12" fill="#30353b" text-anchor="end" textLength="37.6" lengthAdjust="spacing">50 Wh</text>
<text x="66.8" y="628.4" font-size="12" fill="#30353b" text-anchor="end" textLength="37.2" lengthAdjust="spacing">0 kWh</text>
<text x="72.8" y="643.9" font-size="12" fill="#30353b" text-anchor="middle" textLength="51.5" lengthAdjust="spacing">18:33:00</text>
<text x="197.2" y="643.9" font-size="12" fill="#30353b" text-anchor="middle" textLength="51.5" lengthAdjust="spacing">18:34:00</text>
<text x="321.2" y="643.9" font-size="12" fill="#30353b" text-anchor="middle" textLength="51.5" lengthAdjust="spacing">18:35:00</text>
<text x="445.2" y="643.9" font-size="12" fill="#30353b" text-anchor="middle" textLength="51.5" lengthAdjust="spacing">18:36:00</text>
<text x="569.2" y="643.9" font-size="12" fill="#30353b" text-anchor="middle" textLength="51.5" lengthAdjust="spacing">18:37:00</text>
<g clip-path="url(#clipPE)">
<rect x="64" y="558.1" width="19" height="66.90000000000002" fill="url(#gbar)"/>
<rect x="64" y="555.9" width="19" height="2.2" fill="#73bf69"/>
<rect x="95" y="558.1" width="19" height="66.90000000000002" fill="url(#gbar)"/>
<rect x="95" y="555.9" width="19" height="2.2" fill="#73bf69"/>
<rect x="126" y="558.1" width="19" height="66.90000000000002" fill="url(#gbar)"/>
<rect x="126" y="555.9" width="19" height="2.2" fill="#73bf69"/>
<rect x="157" y="558.9" width="19" height="66.10000000000002" fill="url(#gbar)"/>
<rect x="157" y="555.9" width="19" height="3" fill="#73bf69"/>
<rect x="188" y="558.9" width="19" height="66.10000000000002" fill="url(#gbar)"/>
<rect x="188" y="555.9" width="19" height="3" fill="#73bf69"/>
<rect x="219" y="558.9" width="19" height="66.10000000000002" fill="url(#gbar)"/>
<rect x="219" y="555.9" width="19" height="3" fill="#73bf69"/>
<rect x="250" y="558.9" width="19" height="66.10000000000002" fill="url(#gbar)"/>
<rect x="250" y="555.9" width="19" height="3" fill="#73bf69"/>
<rect x="281" y="558.9" width="19" height="66.10000000000002" fill="url(#gbar)"/>
<rect x="281" y="555.9" width="19" height="3" fill="#73bf69"/>
<rect x="312" y="558.9" width="19" height="66.10000000000002" fill="url(#gbar)"/>
<rect x="312" y="555.9" width="19" height="3" fill="#73bf69"/>
<rect x="343" y="558.9" width="19" height="66.10000000000002" fill="url(#gbar)"/>
<rect x="343" y="555.9" width="19" height="3" fill="#73bf69"/>
<rect x="374" y="558.9" width="19" height="66.10000000000002" fill="url(#gbar)"/>
<rect x="374" y="555.9" width="19" height="3" fill="#73bf69"/>
<rect x="405" y="558.9" width="19" height="66.10000000000002" fill="url(#gbar)"/>
<rect x="405" y="555.9" width="19" height="3" fill="#73bf69"/>
<rect x="436" y="558.9" width="19" height="66.10000000000002" fill="url(#gbar)"/>
<rect x="436" y="555.9" width="19" height="3" fill="#73bf69"/>
<rect x="467" y="558.9" width="19" height="66.10000000000002" fill="url(#gbar)"/>
<rect x="467" y="555.9" width="19" height="3" fill="#73bf69"/>
<rect x="498" y="558.9" width="19" height="66.10000000000002" fill="url(#gbar)"/>
<rect x="498" y="555.9" width="19" height="3" fill="#73bf69"/>
<rect x="529" y="558.9" width="19" height="66.10000000000002" fill="url(#gbar)"/>
<rect x="529" y="555.9" width="19" height="3" fill="#73bf69"/>
<rect x="560" y="558.9" width="19" height="66.10000000000002" fill="url(#gbar)"/>
<rect x="560" y="555.9" width="19" height="3" fill="#73bf69"/>
<rect x="591" y="558.9" width="19" height="66.10000000000002" fill="url(#gbar)"/>
<rect x="591" y="555.9" width="19" height="3" fill="#73bf69"/>
<rect x="622" y="558.9" width="19" height="66.10000000000002" fill="url(#gbar)"/>
<rect x="622" y="555.9" width="19" height="3" fill="#73bf69"/>
<rect x="653" y="557.6999999999999" width="19" height="67.30000000000003" fill="url(#gbar)"/>
<rect x="653" y="555.9" width="19" height="1.8" fill="#73bf69"/>
</g>
<rect x="23" y="659" width="14" height="4" fill="#56a64b" rx="2"/>
<text x="45.5" y="664" font-size="12.5" fill="#30353b" textLength="27.5" lengthAdjust="spacing">Total</text>
<rect x="83" y="659" width="14" height="4" fill="#e0b400" rx="2"/>
<text x="105" y="664" font-size="12.5" fill="#30353b" textLength="59.5" lengthAdjust="spacing">eu-west-3</text>
<rect x="175.2" y="659" width="14" height="4" fill="#5794f2" rx="2"/>
<text x="197.2" y="664" font-size="12.5" fill="#30353b" textLength="54" lengthAdjust="spacing">us-east-1</text>
<rect x="715.5" y="497.5" width="774" height="181" rx="2" fill="#fff" stroke="#e1e2e4" stroke-width="1"/>
<path d="M736.75 507.10 L726.90 515.28 L731.61 515.55 L728.87 521.60 L738.80 513.33 L733.83 512.88Z" fill="#ffc21c" stroke="#ffbf10" stroke-width="0.3" stroke-linejoin="round"/>
<text x="745.5" y="519" font-size="15" fill="#24292e" textLength="370.5" lengthAdjust="spacing" stroke="#24292e" stroke-width="0.2">Primary Energy (Use) - by region - projected for 1 year</text>
<text x="724.3" y="552.0" font-size="13" fill="#24292e" textLength="30.5" lengthAdjust="spacing">Total</text>
<rect x="724" y="557" width="10" height="23" rx="2.5" fill="url(#glit)"/>
<rect x="736" y="557" width="10" height="23" rx="2.5" fill="url(#glit)"/>
<rect x="748" y="557" width="10" height="23" rx="2.5" fill="url(#glit)"/>
<rect x="760" y="557" width="10" height="23" rx="2.5" fill="url(#glit)"/>
<rect x="772" y="557" width="10" height="23" rx="2.5" fill="url(#glit)"/>
<rect x="784" y="557" width="10" height="23" rx="2.5" fill="url(#glit)"/>
<rect x="796" y="557" width="10" height="23" rx="2.5" fill="url(#glit)"/>
<rect x="808" y="557" width="10" height="23" rx="2.5" fill="url(#glit)"/>
<rect x="820" y="557" width="10" height="23" rx="2.5" fill="url(#glit)"/>
<rect x="832" y="557" width="10" height="23" rx="2.5" fill="url(#glit)"/>
<rect x="844" y="557" width="10" height="23" rx="2.5" fill="url(#glit)"/>
<rect x="856" y="557" width="10" height="23" rx="2.5" fill="url(#glit)"/>
<rect x="868" y="557" width="10" height="23" rx="2.5" fill="url(#glit)"/>
<rect x="880" y="557" width="10" height="23" rx="2.5" fill="url(#glit)"/>
<rect x="892" y="557" width="10" height="23" rx="2.5" fill="url(#glit)"/>
<rect x="904" y="557" width="10" height="23" rx="2.5" fill="url(#glit)"/>
<rect x="916" y="557" width="10" height="23" rx="2.5" fill="url(#glit)"/>
<rect x="928" y="557" width="10" height="23" rx="2.5" fill="url(#glit)"/>
<rect x="940" y="557" width="10" height="23" rx="2.5" fill="url(#glit)"/>
<rect x="952" y="557" width="10" height="23" rx="2.5" fill="url(#glit)"/>
<rect x="964" y="557" width="10" height="23" rx="2.5" fill="url(#glit)"/>
<rect x="976" y="557" width="10" height="23" rx="2.5" fill="url(#glit)"/>
<rect x="988" y="557" width="10" height="23" rx="2.5" fill="url(#glit)"/>
<rect x="1000" y="557" width="10" height="23" rx="2.5" fill="url(#glit)"/>
<rect x="1012" y="557" width="10" height="23" rx="2.5" fill="url(#glit)"/>
<rect x="1024" y="557" width="10" height="23" rx="2.5" fill="url(#glit)"/>
<rect x="1036" y="557" width="10" height="23" rx="2.5" fill="url(#glit)"/>
<rect x="1048" y="557" width="10" height="23" rx="2.5" fill="url(#glit)"/>
<rect x="1060" y="557" width="10" height="23" rx="2.5" fill="url(#glit)"/>
<rect x="1072" y="557" width="10" height="23" rx="2.5" fill="url(#glit)"/>
<rect x="1084" y="557" width="10" height="23" rx="2.5" fill="url(#glit)"/>
<rect x="1096" y="557" width="10" height="23" rx="2.5" fill="url(#glit)"/>
<rect x="1108" y="557" width="10" height="23" rx="2.5" fill="url(#glit)"/>
<rect x="1120" y="557" width="10" height="23" rx="2.5" fill="url(#glit)"/>
<rect x="1132" y="557" width="10" height="23" rx="2.5" fill="url(#glit)"/>
<rect x="1144" y="557" width="10" height="23" rx="2.5" fill="url(#glit)"/>
<rect x="1156" y="557" width="10" height="23" rx="2.5" fill="url(#glit)"/>
<rect x="1168" y="557" width="10" height="23" rx="2.5" fill="url(#glit)"/>
<rect x="1180" y="557" width="10" height="23" rx="2.5" fill="url(#glit)"/>
<rect x="1192" y="557" width="10" height="23" rx="2.5" fill="url(#glit)"/>
<rect x="1204" y="557" width="10" height="23" rx="2.5" fill="url(#glit)"/>
<rect x="1216" y="557" width="10" height="23" rx="2.5" fill="url(#glit)"/>
<rect x="1228" y="557" width="10" height="23" rx="2.5" fill="url(#glit)"/>
<rect x="1240" y="557" width="10" height="23" rx="2.5" fill="url(#glit)"/>
<rect x="1252" y="557" width="10" height="23" rx="2.5" fill="url(#glit)"/>
<rect x="1264" y="557" width="10" height="23" rx="2.5" fill="url(#glit)"/>
<rect x="1276" y="557" width="10" height="23" rx="2.5" fill="url(#glit)"/>
<rect x="1288" y="557" width="10" height="23" rx="2.5" fill="url(#glit)"/>
<rect x="1300" y="557" width="10" height="23" rx="2.5" fill="url(#glit)"/>
<rect x="1312" y="557" width="10" height="23" rx="2.5" fill="url(#glit)"/>
<text x="1464.3" y="577.0" font-size="19" fill="#24292e" text-anchor="end" textLength="47.1" lengthAdjust="spacingAndGlyphs">MWh</text>
<text x="1412.3" y="577.0" font-size="23.5" fill="#24292e" text-anchor="end" textLength="41" lengthAdjust="spacingAndGlyphs">1.31</text>
<text x="724.3" y="596.5" font-size="13" fill="#24292e" textLength="63.3" lengthAdjust="spacing">eu-west-3</text>
<rect x="724" y="602" width="10" height="23" rx="2.5" fill="url(#glit)"/>
<rect x="736" y="602" width="10" height="23" rx="2.5" fill="#e0eddc"/>
<rect x="748" y="602" width="10" height="23" rx="2.5" fill="#e0eddc"/>
<rect x="760" y="602" width="10" height="23" rx="2.5" fill="#e0eddc"/>
<rect x="772" y="602" width="10" height="23" rx="2.5" fill="#e0eddc"/>
<rect x="784" y="602" width="10" height="23" rx="2.5" fill="#e0eddc"/>
<rect x="796" y="602" width="10" height="23" rx="2.5" fill="#e0eddc"/>
<rect x="808" y="602" width="10" height="23" rx="2.5" fill="#e0eddc"/>
<rect x="820" y="602" width="10" height="23" rx="2.5" fill="#e0eddc"/>
<rect x="832" y="602" width="10" height="23" rx="2.5" fill="#e0eddc"/>
<rect x="844" y="602" width="10" height="23" rx="2.5" fill="#e0eddc"/>
<rect x="856" y="602" width="10" height="23" rx="2.5" fill="#e0eddc"/>
<rect x="868" y="602" width="10" height="23" rx="2.5" fill="#e0eddc"/>
<rect x="880" y="602" width="10" height="23" rx="2.5" fill="#e0eddc"/>
<rect x="892" y="602" width="10" height="23" rx="2.5" fill="#e0eddc"/>
<rect x="904" y="602" width="10" height="23" rx="2.5" fill="#e0eddc"/>
<rect x="916" y="602" width="10" height="23" rx="2.5" fill="#e0eddc"/>
<rect x="928" y="602" width="10" height="23" rx="2.5" fill="#e0eddc"/>
<rect x="940" y="602" width="10" height="23" rx="2.5" fill="#e0eddc"/>
<rect x="952" y="602" width="10" height="23" rx="2.5" fill="#e0eddc"/>
<rect x="964" y="602" width="10" height="23" rx="2.5" fill="#e0eddc"/>
<rect x="976" y="602" width="10" height="23" rx="2.5" fill="#e0eddc"/>
<rect x="988" y="602" width="10" height="23" rx="2.5" fill="#e0eddc"/>
<rect x="1000" y="602" width="10" height="23" rx="2.5" fill="#e0eddc"/>
<rect x="1012" y="602" width="10" height="23" rx="2.5" fill="#e0eddc"/>
<rect x="1024" y="602" width="10" height="23" rx="2.5" fill="#e0eddc"/>
<rect x="1036" y="602" width="10" height="23" rx="2.5" fill="#e0eddc"/>
<rect x="1048" y="602" width="10" height="23" rx="2.5" fill="#e0eddc"/>
<rect x="1060" y="602" width="10" height="23" rx="2.5" fill="#e0eddc"/>
<rect x="1072" y="602" width="10" height="23" rx="2.5" fill="#e0eddc"/>
<rect x="1084" y="602" width="10" height="23" rx="2.5" fill="#e0eddc"/>
<rect x="1096" y="602" width="10" height="23" rx="2.5" fill="#e0eddc"/>
<rect x="1108" y="602" width="10" height="23" rx="2.5" fill="#e0eddc"/>
<rect x="1120" y="602" width="10" height="23" rx="2.5" fill="#e0eddc"/>
<rect x="1132" y="602" width="10" height="23" rx="2.5" fill="#e0eddc"/>
<rect x="1144" y="602" width="10" height="23" rx="2.5" fill="#e0eddc"/>
<rect x="1156" y="602" width="10" height="23" rx="2.5" fill="#e0eddc"/>
<rect x="1168" y="602" width="10" height="23" rx="2.5" fill="#e0eddc"/>
<rect x="1180" y="602" width="10" height="23" rx="2.5" fill="#e0eddc"/>
<rect x="1192" y="602" width="10" height="23" rx="2.5" fill="#e0eddc"/>
<rect x="1204" y="602" width="10" height="23" rx="2.5" fill="#e0eddc"/>
<rect x="1216" y="602" width="10" height="23" rx="2.5" fill="#e0eddc"/>
<rect x="1228" y="602" width="10" height="23" rx="2.5" fill="#e0eddc"/>
<rect x="1240" y="602" width="10" height="23" rx="2.5" fill="#e0eddc"/>
<rect x="1252" y="602" width="10" height="23" rx="2.5" fill="#e0eddc"/>
<rect x="1264" y="602" width="10" height="23" rx="2.5" fill="#e0eddc"/>
<rect x="1276" y="602" width="10" height="23" rx="2.5" fill="#e0eddc"/>
<rect x="1288" y="602" width="10" height="23" rx="2.5" fill="#e0eddc"/>
<rect x="1300" y="602" width="10" height="23" rx="2.5" fill="#e0eddc"/>
<rect x="1312" y="602" width="10" height="23" rx="2.5" fill="#e0eddc"/>
<text x="1464.3" y="621.5" font-size="19" fill="#24292e" text-anchor="end" textLength="40.300000000000004" lengthAdjust="spacingAndGlyphs">kWh</text>
<text x="1419.1" y="621.5" font-size="23.5" fill="#24292e" text-anchor="end" textLength="44.8" lengthAdjust="spacingAndGlyphs">41.6</text>
<text x="724.3" y="641.0" font-size="13" fill="#24292e" textLength="58" lengthAdjust="spacing">us-east-1</text>
<rect x="724" y="647" width="10" height="23" rx="2.5" fill="url(#glit)"/>
<rect x="736" y="647" width="10" height="23" rx="2.5" fill="url(#glit)"/>
<rect x="748" y="647" width="10" height="23" rx="2.5" fill="url(#glit)"/>
<rect x="760" y="647" width="10" height="23" rx="2.5" fill="url(#glit)"/>
<rect x="772" y="647" width="10" height="23" rx="2.5" fill="url(#glit)"/>
<rect x="784" y="647" width="10" height="23" rx="2.5" fill="url(#glit)"/>
<rect x="796" y="647" width="10" height="23" rx="2.5" fill="url(#glit)"/>
<rect x="808" y="647" width="10" height="23" rx="2.5" fill="url(#glit)"/>
<rect x="820" y="647" width="10" height="23" rx="2.5" fill="url(#glit)"/>
<rect x="832" y="647" width="10" height="23" rx="2.5" fill="url(#glit)"/>
<rect x="844" y="647" width="10" height="23" rx="2.5" fill="url(#glit)"/>
<rect x="856" y="647" width="10" height="23" rx="2.5" fill="url(#glit)"/>
<rect x="868" y="647" width="10" height="23" rx="2.5" fill="url(#glit)"/>
<rect x="880" y="647" width="10" height="23" rx="2.5" fill="url(#glit)"/>
<rect x="892" y="647" width="10" height="23" rx="2.5" fill="url(#glit)"/>
<rect x="904" y="647" width="10" height="23" rx="2.5" fill="url(#glit)"/>
<rect x="916" y="647" width="10" height="23" rx="2.5" fill="url(#glit)"/>
<rect x="928" y="647" width="10" height="23" rx="2.5" fill="url(#glit)"/>
<rect x="940" y="647" width="10" height="23" rx="2.5" fill="url(#glit)"/>
<rect x="952" y="647" width="10" height="23" rx="2.5" fill="url(#glit)"/>
<rect x="964" y="647" width="10" height="23" rx="2.5" fill="url(#glit)"/>
<rect x="976" y="647" width="10" height="23" rx="2.5" fill="url(#glit)"/>
<rect x="988" y="647" width="10" height="23" rx="2.5" fill="url(#glit)"/>
<rect x="1000" y="647" width="10" height="23" rx="2.5" fill="url(#glit)"/>
<rect x="1012" y="647" width="10" height="23" rx="2.5" fill="url(#glit)"/>
<rect x="1024" y="647" width="10" height="23" rx="2.5" fill="url(#glit)"/>
<rect x="1036" y="647" width="10" height="23" rx="2.5" fill="url(#glit)"/>
<rect x="1048" y="647" width="10" height="23" rx="2.5" fill="url(#glit)"/>
<rect x="1060" y="647" width="10" height="23" rx="2.5" fill="url(#glit)"/>
<rect x="1072" y="647" width="10" height="23" rx="2.5" fill="url(#glit)"/>
<rect x="1084" y="647" width="10" height="23" rx="2.5" fill="url(#glit)"/>
<rect x="1096" y="647" width="10" height="23" rx="2.5" fill="url(#glit)"/>
<rect x="1108" y="647" width="10" height="23" rx="2.5" fill="url(#glit)"/>
<rect x="1120" y="647" width="10" height="23" rx="2.5" fill="url(#glit)"/>
<rect x="1132" y="647" width="10" height="23" rx="2.5" fill="url(#glit)"/>
<rect x="1144" y="647" width="10" height="23" rx="2.5" fill="url(#glit)"/>
<rect x="1156" y="647" width="10" height="23" rx="2.5" fill="url(#glit)"/>
<rect x="1168" y="647" width="10" height="23" rx="2.5" fill="url(#glit)"/>
<rect x="1180" y="647" width="10" height="23" rx="2.5" fill="url(#glit)"/>
<rect x="1192" y="647" width="10" height="23" rx="2.5" fill="url(#glit)"/>
<rect x="1204" y="647" width="10" height="23" rx="2.5" fill="url(#glit)"/>
<rect x="1216" y="647" width="10" height="23" rx="2.5" fill="url(#glit)"/>
<rect x="1228" y="647" width="10" height="23" rx="2.5" fill="url(#glit)"/>
<rect x="1240" y="647" width="10" height="23" rx="2.5" fill="url(#glit)"/>
<rect x="1252" y="647" width="10" height="23" rx="2.5" fill="url(#glit)"/>
<rect x="1264" y="647" width="10" height="23" rx="2.5" fill="url(#glit)"/>
<rect x="1276" y="647" width="10" height="23" rx="2.5" fill="url(#glit)"/>
<rect x="1288" y="647" width="10" height="23" rx="2.5" fill="url(#glit)"/>
<rect x="1300" y="647" width="10" height="23" rx="2.5" fill="url(#glit)"/>
<rect x="1312" y="647" width="10" height="23" rx="2.5" fill="#e0eddc"/>
<text x="1464.3" y="666.0" font-size="19" fill="#24292e" text-anchor="end" textLength="47.1" lengthAdjust="spacingAndGlyphs">MWh</text>
<text x="1412.3" y="666.0" font-size="23.5" fill="#24292e" text-anchor="end" textLength="44.8" lengthAdjust="spacingAndGlyphs">1.27</text>
<rect x="10.5" y="725.5" width="696" height="181" rx="2" fill="#fff" stroke="#e1e2e4" stroke-width="1"/>
<path d="M 26.01,734.10 C 29.23,734.97 30.15,737.59 29.51,740.47 C 30.25,740.73 31.17,740.38 31.72,739.25 C 33.93,741.43 34.58,745.09 33.01,747.53 C 31.90,749.28 29.97,749.80 27.85,749.80 C 24.62,749.80 21.68,748.06 21.40,744.57 C 21.22,741.95 22.32,739.77 23.61,738.29 C 23.80,739.33 24.07,740.21 24.72,740.73 C 24.90,738.29 26.56,736.54 26.01,734.10 Z" fill="url(#gfire)"/>
<path d="M 28.59,739.86 C 28.22,741.95 30.25,743.69 30.25,746.49 C 30.25,748.23 29.14,748.93 27.85,748.93 C 26.19,748.93 25.09,748.06 25.27,746.14 C 25.45,745.44 26.01,745.09 26.56,745.44 C 26.01,743.69 27.48,741.08 28.59,739.86 Z" fill="url(#gflame)"/>
<text x="40.5" y="747.5" font-size="15" fill="#24292e" textLength="387.5" lengthAdjust="spacing" stroke="#24292e" stroke-width="0.2">Global Warming Potential (Use) - for an hour (Kg Co2 eq)</text>
<path d="M450.40 737.20 L447.40 737.20 Q446.00 737.20 446.00 738.60 L446.00 747.20 Q446.00 748.60 447.40 748.60 L456.00 748.60 Q457.40 748.60 457.40 747.20 L457.40 743.90" fill="none" stroke="#6e7175" stroke-width="1.5" stroke-linecap="round"/>
<path d="M453.60 736.10 L458.20 736.10 L458.20 740.70 M458.20 736.10 L451.20 743.10" fill="none" stroke="#6e7175" stroke-width="1.5" stroke-linecap="round" stroke-linejoin="round"/>
<path d="M11 895.8 L35.40 895.8 L70.16 895.8 L104.92 895.8 L139.68 895.8 L174.44 895.8 L209.20 895.8 L243.96 895.8 L278.72 905.2 L313.48 905.2 L348.24 905.2 L383.00 905.2 L417.76 905.2 L452.52 905.2 L487.28 905.2 L522.04 905.2 L556.80 833.3 L591.56 833.3 L626.32 833.3 L661.08 833.3 L695.84 832.2 L695.8 906 L11 906 Z" fill="#dcebd8"/>
<path d="M11 895.8 L35.40 895.8 L70.16 895.8 L104.92 895.8 L139.68 895.8 L174.44 895.8 L209.20 895.8 L243.96 895.8 L278.72 905.2 L313.48 905.2 L348.24 905.2 L383.00 905.2 L417.76 905.2 L452.52 905.2 L487.28 905.2 L522.04 905.2 L556.80 833.3 L591.56 833.3 L626.32 833.3 L661.08 833.3 L695.84 832.2" fill="none" stroke="#56a64b" stroke-width="1.1"/>
<circle cx="35.40" cy="895.8" r="1" fill="#56a64b"/>
<circle cx="70.16" cy="895.8" r="1" fill="#56a64b"/>
<circle cx="104.92" cy="895.8" r="1" fill="#56a64b"/>
<circle cx="139.68" cy="895.8" r="1" fill="#56a64b"/>
<circle cx="174.44" cy="895.8" r="1" fill="#56a64b"/>
<circle cx="209.20" cy="895.8" r="1" fill="#56a64b"/>
<circle cx="243.96" cy="895.8" r="1" fill="#56a64b"/>
<circle cx="278.72" cy="905.2" r="1" fill="#56a64b"/>
<circle cx="313.48" cy="905.2" r="1" fill="#56a64b"/>
<circle cx="348.24" cy="905.2" r="1" fill="#56a64b"/>
<circle cx="383.00" cy="905.2" r="1" fill="#56a64b"/>
<circle cx="417.76" cy="905.2" r="1" fill="#56a64b"/>
<circle cx="452.52" cy="905.2" r="1" fill="#56a64b"/>
<circle cx="487.28" cy="905.2" r="1" fill="#56a64b"/>
<circle cx="522.04" cy="905.2" r="1" fill="#56a64b"/>
<circle cx="556.80" cy="833.3" r="1" fill="#56a64b"/>
<circle cx="591.56" cy="833.3" r="1" fill="#56a64b"/>
<circle cx="626.32" cy="833.3" r="1" fill="#56a64b"/>
<circle cx="661.08" cy="833.3" r="1" fill="#56a64b"/>
<text x="303.5" y="851.4" font-size="53" fill="#56a64b" textLength="80" lengthAdjust="spacingAndGlyphs" stroke="#56a64b" stroke-width="1.1">17.1</text>
<text x="391.5" y="851.4" font-size="37" fill="#56a64b" stroke="#56a64b" stroke-width="0.7">g</text>
<rect x="715.5" y="725.5" width="774" height="181" rx="2" fill="#fff" stroke="#e1e2e4" stroke-width="1"/>
<path d="M 730.71,734.10 C 733.93,734.97 734.85,737.59 734.21,740.47 C 734.95,740.73 735.87,740.38 736.42,739.25 C 738.63,741.43 739.28,745.09 737.71,747.53 C 736.60,749.28 734.67,749.80 732.55,749.80 C 729.33,749.80 726.38,748.06 726.10,744.57 C 725.92,741.95 727.02,739.77 728.31,738.29 C 728.50,739.33 728.77,740.21 729.42,740.73 C 729.60,738.29 731.26,736.54 730.71,734.10 Z" fill="url(#gfire)"/>
<path d="M 733.29,739.86 C 732.92,741.95 734.95,743.69 734.95,746.49 C 734.95,748.23 733.84,748.93 732.55,748.93 C 730.89,748.93 729.79,748.06 729.97,746.14 C 730.15,745.44 730.71,745.09 731.26,745.44 C 730.71,743.69 732.18,741.08 733.29,739.86 Z" fill="url(#gflame)"/>
<text x="745.5" y="747" font-size="15" fill="#24292e" textLength="385" lengthAdjust="spacing" stroke="#24292e" stroke-width="0.2">GWP (Use) - by region (Kg Co2 eq) - projected for 1 year</text>
<path d="M1151.80 737.40 L1148.80 737.40 Q1147.40 737.40 1147.40 738.80 L1147.40 747.40 Q1147.40 748.80 1148.80 748.80 L1157.40 748.80 Q1158.80 748.80 1158.80 747.40 L1158.80 744.10" fill="none" stroke="#6e7175" stroke-width="1.5" stroke-linecap="round"/>
<path d="M1155.00 736.30 L1159.60 736.30 L1159.60 740.90 M1159.60 736.30 L1152.60 743.30" fill="none" stroke="#6e7175" stroke-width="1.5" stroke-linecap="round" stroke-linejoin="round"/>
<text x="724.3" y="780.0" font-size="13" fill="#24292e" textLength="30.5" lengthAdjust="spacing">Total</text>
<rect x="724" y="785" width="10" height="23" rx="2.5" fill="url(#glit)"/>
<rect x="736" y="785" width="10" height="23" rx="2.5" fill="url(#glit)"/>
<rect x="748" y="785" width="10" height="23" rx="2.5" fill="url(#glit)"/>
<rect x="760" y="785" width="10" height="23" rx="2.5" fill="url(#glit)"/>
<rect x="772" y="785" width="10" height="23" rx="2.5" fill="url(#glit)"/>
<rect x="784" y="785" width="10" height="23" rx="2.5" fill="url(#glit)"/>
<rect x="796" y="785" width="10" height="23" rx="2.5" fill="url(#glit)"/>
<rect x="808" y="785" width="10" height="23" rx="2.5" fill="url(#glit)"/>
<rect x="820" y="785" width="10" height="23" rx="2.5" fill="url(#glit)"/>
<rect x="832" y="785" width="10" height="23" rx="2.5" fill="url(#glit)"/>
<rect x="844" y="785" width="10" height="23" rx="2.5" fill="url(#glit)"/>
<rect x="856" y="785" width="10" height="23" rx="2.5" fill="url(#glit)"/>
<rect x="868" y="785" width="10" height="23" rx="2.5" fill="url(#glit)"/>
<rect x="880" y="785" width="10" height="23" rx="2.5" fill="url(#glit)"/>
<rect x="892" y="785" width="10" height="23" rx="2.5" fill="url(#glit)"/>
<rect x="904" y="785" width="10" height="23" rx="2.5" fill="url(#glit)"/>
<rect x="916" y="785" width="10" height="23" rx="2.5" fill="url(#glit)"/>
<rect x="928" y="785" width="10" height="23" rx="2.5" fill="url(#glit)"/>
<rect x="940" y="785" width="10" height="23" rx="2.5" fill="url(#glit)"/>
<rect x="952" y="785" width="10" height="23" rx="2.5" fill="url(#glit)"/>
<rect x="964" y="785" width="10" height="23" rx="2.5" fill="url(#glit)"/>
<rect x="976" y="785" width="10" height="23" rx="2.5" fill="url(#glit)"/>
<rect x="988" y="785" width="10" height="23" rx="2.5" fill="url(#glit)"/>
<rect x="1000" y="785" width="10" height="23" rx="2.5" fill="url(#glit)"/>
<rect x="1012" y="785" width="10" height="23" rx="2.5" fill="url(#glit)"/>
<rect x="1024" y="785" width="10" height="23" rx="2.5" fill="url(#glit)"/>
<rect x="1036" y="785" width="10" height="23" rx="2.5" fill="url(#glit)"/>
<rect x="1048" y="785" width="10" height="23" rx="2.5" fill="url(#glit)"/>
<rect x="1060" y="785" width="10" height="23" rx="2.5" fill="url(#glit)"/>
<rect x="1072" y="785" width="10" height="23" rx="2.5" fill="url(#glit)"/>
<rect x="1084" y="785" width="10" height="23" rx="2.5" fill="url(#glit)"/>
<rect x="1096" y="785" width="10" height="23" rx="2.5" fill="url(#glit)"/>
<rect x="1108" y="785" width="10" height="23" rx="2.5" fill="url(#glit)"/>
<rect x="1120" y="785" width="10" height="23" rx="2.5" fill="url(#glit)"/>
<rect x="1132" y="785" width="10" height="23" rx="2.5" fill="url(#glit)"/>
<rect x="1144" y="785" width="10" height="23" rx="2.5" fill="url(#glit)"/>
<rect x="1156" y="785" width="10" height="23" rx="2.5" fill="url(#glit)"/>
<rect x="1168" y="785" width="10" height="23" rx="2.5" fill="url(#glit)"/>
<rect x="1180" y="785" width="10" height="23" rx="2.5" fill="url(#glit)"/>
<rect x="1192" y="785" width="10" height="23" rx="2.5" fill="url(#glit)"/>
<rect x="1204" y="785" width="10" height="23" rx="2.5" fill="url(#glit)"/>
<rect x="1216" y="785" width="10" height="23" rx="2.5" fill="url(#glit)"/>
<rect x="1228" y="785" width="10" height="23" rx="2.5" fill="url(#glit)"/>
<rect x="1240" y="785" width="10" height="23" rx="2.5" fill="url(#glit)"/>
<rect x="1252" y="785" width="10" height="23" rx="2.5" fill="url(#glit)"/>
<rect x="1264" y="785" width="10" height="23" rx="2.5" fill="url(#glit)"/>
<rect x="1276" y="785" width="10" height="23" rx="2.5" fill="url(#glit)"/>
<rect x="1288" y="785" width="10" height="23" rx="2.5" fill="url(#glit)"/>
<rect x="1300" y="785" width="10" height="23" rx="2.5" fill="url(#glit)"/>
<rect x="1312" y="785" width="10" height="23" rx="2.5" fill="url(#glit)"/>
<text x="1464.3" y="805.0" font-size="19" fill="#24292e" text-anchor="end" textLength="22.400000000000002" lengthAdjust="spacingAndGlyphs">kg</text>
<text x="1437.0" y="805.0" font-size="23.5" fill="#24292e" text-anchor="end" textLength="40" lengthAdjust="spacingAndGlyphs">149</text>
<text x="724.3" y="824.5" font-size="13" fill="#24292e" textLength="63.3" lengthAdjust="spacing">eu-west-3</text>
<rect x="724" y="830" width="10" height="23" rx="2.5" fill="url(#glit)"/>
<rect x="736" y="830" width="10" height="23" rx="2.5" fill="#e0eddc"/>
<rect x="748" y="830" width="10" height="23" rx="2.5" fill="#e0eddc"/>
<rect x="760" y="830" width="10" height="23" rx="2.5" fill="#e0eddc"/>
<rect x="772" y="830" width="10" height="23" rx="2.5" fill="#e0eddc"/>
<rect x="784" y="830" width="10" height="23" rx="2.5" fill="#e0eddc"/>
<rect x="796" y="830" width="10" height="23" rx="2.5" fill="#e0eddc"/>
<rect x="808" y="830" width="10" height="23" rx="2.5" fill="#e0eddc"/>
<rect x="820" y="830" width="10" height="23" rx="2.5" fill="#e0eddc"/>
<rect x="832" y="830" width="10" height="23" rx="2.5" fill="#e0eddc"/>
<rect x="844" y="830" width="10" height="23" rx="2.5" fill="#e0eddc"/>
<rect x="856" y="830" width="10" height="23" rx="2.5" fill="#e0eddc"/>
<rect x="868" y="830" width="10" height="23" rx="2.5" fill="#e0eddc"/>
<rect x="880" y="830" width="10" height="23" rx="2.5" fill="#e0eddc"/>
<rect x="892" y="830" width="10" height="23" rx="2.5" fill="#e0eddc"/>
<rect x="904" y="830" width="10" height="23" rx="2.5" fill="#e0eddc"/>
<rect x="916" y="830" width="10" height="23" rx="2.5" fill="#e0eddc"/>
<rect x="928" y="830" width="10" height="23" rx="2.5" fill="#e0eddc"/>
<rect x="940" y="830" width="10" height="23" rx="2.5" fill="#e0eddc"/>
<rect x="952" y="830" width="10" height="23" rx="2.5" fill="#e0eddc"/>
<rect x="964" y="830" width="10" height="23" rx="2.5" fill="#e0eddc"/>
<rect x="976" y="830" width="10" height="23" rx="2.5" fill="#e0eddc"/>
<rect x="988" y="830" width="10" height="23" rx="2.5" fill="#e0eddc"/>
<rect x="1000" y="830" width="10" height="23" rx="2.5" fill="#e0eddc"/>
<rect x="1012" y="830" width="10" height="23" rx="2.5" fill="#e0eddc"/>
<rect x="1024" y="830" width="10" height="23" rx="2.5" fill="#e0eddc"/>
<rect x="1036" y="830" width="10" height="23" rx="2.5" fill="#e0eddc"/>
<rect x="1048" y="830" width="10" height="23" rx="2.5" fill="#e0eddc"/>
<rect x="1060" y="830" width="10" height="23" rx="2.5" fill="#e0eddc"/>
<rect x="1072" y="830" width="10" height="23" rx="2.5" fill="#e0eddc"/>
<rect x="1084" y="830" width="10" height="23" rx="2.5" fill="#e0eddc"/>
<rect x="1096" y="830" width="10" height="23" rx="2.5" fill="#e0eddc"/>
<rect x="1108" y="830" width="10" height="23" rx="2.5" fill="#e0eddc"/>
<rect x="1120" y="830" width="10" height="23" rx="2.5" fill="#e0eddc"/>
<rect x="1132" y="830" width="10" height="23" rx="2.5" fill="#e0eddc"/>
<rect x="1144" y="830" width="10" height="23" rx="2.5" fill="#e0eddc"/>
<rect x="1156" y="830" width="10" height="23" rx="2.5" fill="#e0eddc"/>
<rect x="1168" y="830" width="10" height="23" rx="2.5" fill="#e0eddc"/>
<rect x="1180" y="830" width="10" height="23" rx="2.5" fill="#e0eddc"/>
<rect x="1192" y="830" width="10" height="23" rx="2.5" fill="#e0eddc"/>
<rect x="1204" y="830" width="10" height="23" rx="2.5" fill="#e0eddc"/>
<rect x="1216" y="830" width="10" height="23" rx="2.5" fill="#e0eddc"/>
<rect x="1228" y="830" width="10" height="23" rx="2.5" fill="#e0eddc"/>
<rect x="1240" y="830" width="10" height="23" rx="2.5" fill="#e0eddc"/>
<rect x="1252" y="830" width="10" height="23" rx="2.5" fill="#e0eddc"/>
<rect x="1264" y="830" width="10" height="23" rx="2.5" fill="#e0eddc"/>
<rect x="1276" y="830" width="10" height="23" rx="2.5" fill="#e0eddc"/>
<rect x="1288" y="830" width="10" height="23" rx="2.5" fill="#e0eddc"/>
<rect x="1300" y="830" width="10" height="23" rx="2.5" fill="#e0eddc"/>
<rect x="1312" y="830" width="10" height="23" rx="2.5" fill="#e0eddc"/>
<text x="1464.3" y="849.5" font-size="19" fill="#24292e" text-anchor="end" textLength="22.400000000000002" lengthAdjust="spacingAndGlyphs">kg</text>
<text x="1437.0" y="849.5" font-size="23.5" fill="#24292e" text-anchor="end" textLength="45.8" lengthAdjust="spacingAndGlyphs">1.33</text>
<text x="724.3" y="869.0" font-size="13" fill="#24292e" textLength="58" lengthAdjust="spacing">us-east-1</text>
<rect x="724" y="875" width="10" height="23" rx="2.5" fill="url(#glit)"/>
<rect x="736" y="875" width="10" height="23" rx="2.5" fill="url(#glit)"/>
<rect x="748" y="875" width="10" height="23" rx="2.5" fill="url(#glit)"/>
<rect x="760" y="875" width="10" height="23" rx="2.5" fill="url(#glit)"/>
<rect x="772" y="875" width="10" height="23" rx="2.5" fill="url(#glit)"/>
<rect x="784" y="875" width="10" height="23" rx="2.5" fill="url(#glit)"/>
<rect x="796" y="875" width="10" height="23" rx="2.5" fill="url(#glit)"/>
<rect x="808" y="875" width="10" height="23" rx="2.5" fill="url(#glit)"/>
<rect x="820" y="875" width="10" height="23" rx="2.5" fill="url(#glit)"/>
<rect x="832" y="875" width="10" height="23" rx="2.5" fill="url(#glit)"/>
<rect x="844" y="875" width="10" height="23" rx="2.5" fill="url(#glit)"/>
<rect x="856" y="875" width="10" height="23" rx="2.5" fill="url(#glit)"/>
<rect x="868" y="875" width="10" height="23" rx="2.5" fill="url(#glit)"/>
<rect x="880" y="875" width="10" height="23" rx="2.5" fill="url(#glit)"/>
<rect x="892" y="875" width="10" height="23" rx="2.5" fill="url(#glit)"/>
<rect x="904" y="875" width="10" height="23" rx="2.5" fill="url(#glit)"/>
<rect x="916" y="875" width="10" height="23" rx="2.5" fill="url(#glit)"/>
<rect x="928" y="875" width="10" height="23" rx="2.5" fill="url(#glit)"/>
<rect x="940" y="875" width="10" height="23" rx="2.5" fill="url(#glit)"/>
<rect x="952" y="875" width="10" height="23" rx="2.5" fill="url(#glit)"/>
<rect x="964" y="875" width="10" height="23" rx="2.5" fill="url(#glit)"/>
<rect x="976" y="875" width="10" height="23" rx="2.5" fill="url(#glit)"/>
<rect x="988" y="875" width="10" height="23" rx="2.5" fill="url(#glit)"/>
<rect x="1000" y="875" width="10" height="23" rx="2.5" fill="url(#glit)"/>
<rect x="1012" y="875" width="10" height="23" rx="2.5" fill="url(#glit)"/>
<rect x="1024" y="875" width="10" height="23" rx="2.5" fill="url(#glit)"/>
<rect x="1036" y="875" width="10" height="23" rx="2.5" fill="url(#glit)"/>
<rect x="1048" y="875" width="10" height="23" rx="2.5" fill="url(#glit)"/>
<rect x="1060" y="875" width="10" height="23" rx="2.5" fill="url(#glit)"/>
<rect x="1072" y="875" width="10" height="23" rx="2.5" fill="url(#glit)"/>
<rect x="1084" y="875" width="10" height="23" rx="2.5" fill="url(#glit)"/>
<rect x="1096" y="875" width="10" height="23" rx="2.5" fill="url(#glit)"/>
<rect x="1108" y="875" width="10" height="23" rx="2.5" fill="url(#glit)"/>
<rect x="1120" y="875" width="10" height="23" rx="2.5" fill="url(#glit)"/>
<rect x="1132" y="875" width="10" height="23" rx="2.5" fill="url(#glit)"/>
<rect x="1144" y="875" width="10" height="23" rx="2.5" fill="url(#glit)"/>
<rect x="1156" y="875" width="10" height="23" rx="2.5" fill="url(#glit)"/>
<rect x="1168" y="875" width="10" height="23" rx="2.5" fill="url(#glit)"/>
<rect x="1180" y="875" width="10" height="23" rx="2.5" fill="url(#glit)"/>
<rect x="1192" y="875" width="10" height="23" rx="2.5" fill="url(#glit)"/>
<rect x="1204" y="875" width="10" height="23" rx="2.5" fill="url(#glit)"/>
<rect x="1216" y="875" width="10" height="23" rx="2.5" fill="url(#glit)"/>
<rect x="1228" y="875" width="10" height="23" rx="2.5" fill="url(#glit)"/>
<rect x="1240" y="875" width="10" height="23" rx="2.5" fill="url(#glit)"/>
<rect x="1252" y="875" width="10" height="23" rx="2.5" fill="url(#glit)"/>
<rect x="1264" y="875" width="10" height="23" rx="2.5" fill="url(#glit)"/>
<rect x="1276" y="875" width="10" height="23" rx="2.5" fill="url(#glit)"/>
<rect x="1288" y="875" width="10" height="23" rx="2.5" fill="url(#glit)"/>
<rect x="1300" y="875" width="10" height="23" rx="2.5" fill="url(#glit)"/>
<rect x="1312" y="875" width="10" height="23" rx="2.5" fill="url(#glit)"/>
<text x="1464.3" y="894.0" font-size="19" fill="#24292e" text-anchor="end" textLength="22.400000000000002" lengthAdjust="spacingAndGlyphs">kg</text>
<text x="1437.0" y="894.0" font-size="23.5" fill="#24292e" text-anchor="end" textLength="40" lengthAdjust="spacingAndGlyphs">148</text>
<rect x="10.5" y="915.5" width="696" height="181" rx="2" fill="#fff" stroke="#e1e2e4" stroke-width="1"/>
<path d="M 26.01,924.10 C 29.23,924.97 30.15,927.59 29.51,930.47 C 30.25,930.73 31.17,930.38 31.72,929.25 C 33.93,931.43 34.58,935.09 33.01,937.53 C 31.90,939.28 29.97,939.80 27.85,939.80 C 24.62,939.80 21.68,938.06 21.40,934.57 C 21.22,931.95 22.32,929.77 23.61,928.29 C 23.80,929.33 24.07,930.21 24.72,930.73 C 24.90,928.29 26.56,926.54 26.01,924.10 Z" fill="url(#gfire)"/>
<path d="M 28.59,929.86 C 28.22,931.95 30.25,933.69 30.25,936.49 C 30.25,938.23 29.14,938.93 27.85,938.93 C 26.19,938.93 25.09,938.06 25.27,936.14 C 25.45,935.44 26.01,935.09 26.56,935.44 C 26.01,933.69 27.48,931.08 28.59,929.86 Z" fill="url(#gflame)"/>
<text x="40.5" y="937.4" font-size="15" fill="#24292e" textLength="376.5" lengthAdjust="spacing" stroke="#24292e" stroke-width="0.2">Global Warming Potential (Use) - by region (Kg Co2 eq)</text>
<path d="M439.50 927.20 L436.50 927.20 Q435.10 927.20 435.10 928.60 L435.10 937.20 Q435.10 938.60 436.50 938.60 L445.10 938.60 Q446.50 938.60 446.50 937.20 L446.50 933.90" fill="none" stroke="#6e7175" stroke-width="1.5" stroke-linecap="round"/>
<path d="M442.70 926.10 L447.30 926.10 L447.30 930.70 M447.30 926.10 L440.30 933.10" fill="none" stroke="#6e7175" stroke-width="1.5" stroke-linecap="round" stroke-linejoin="round"/>
<line x1="53.6" y1="981.2" x2="690.2" y2="981.2" stroke="#e9eaeb" stroke-width="1"/>
<line x1="53.6" y1="1001.5" x2="690.2" y2="1001.5" stroke="#e9eaeb" stroke-width="1"/>
<line x1="53.6" y1="1022" x2="690.2" y2="1022" stroke="#e9eaeb" stroke-width="1"/>
<line x1="53.6" y1="1042.8" x2="690.2" y2="1042.8" stroke="#e9eaeb" stroke-width="1"/>
<line x1="75.7" y1="964.6" x2="75.7" y2="1048" stroke="#e9eaeb" stroke-width="1"/>
<line x1="203.2" y1="964.6" x2="203.2" y2="1048" stroke="#e9eaeb" stroke-width="1"/>
<line x1="330.6" y1="964.6" x2="330.6" y2="1048" stroke="#e9eaeb" stroke-width="1"/>
<line x1="458.1" y1="964.6" x2="458.1" y2="1048" stroke="#e9eaeb" stroke-width="1"/>
<line x1="585.5" y1="964.6" x2="585.5" y2="1048" stroke="#e9eaeb" stroke-width="1"/>
<text x="49.3" y="984.7" font-size="12" fill="#30353b" text-anchor="end" textLength="23.5" lengthAdjust="spacing">15 g</text>
<text x="49.3" y="1004.9" font-size="12" fill="#30353b" text-anchor="end" textLength="24.2" lengthAdjust="spacing">10 g</text>
<text x="49.3" y="1025.6" font-size="12" fill="#30353b" text-anchor="end" textLength="18.2" lengthAdjust="spacing">5 g</text>
<text x="49.3" y="1046.6" font-size="12" fill="#30353b" text-anchor="end" textLength="25.2" lengthAdjust="spacing">0 kg</text>
<text x="75.0" y="1061.9" font-size="12" fill="#30353b" text-anchor="middle" textLength="51.5" lengthAdjust="spacing">18:34:00</text>
<text x="202.7" y="1061.9" font-size="12" fill="#30353b" text-anchor="middle" textLength="51.5" lengthAdjust="spacing">18:35:00</text>
<text x="330.1" y="1061.9" font-size="12" fill="#30353b" text-anchor="middle" textLength="51.5" lengthAdjust="spacing">18:36:00</text>
<text x="457.6" y="1061.9" font-size="12" fill="#30353b" text-anchor="middle" textLength="51.5" lengthAdjust="spacing">18:37:00</text>
<text x="585.0" y="1061.9" font-size="12" fill="#30353b" text-anchor="middle" textLength="51.5" lengthAdjust="spacing">18:38:00</text>
<rect x="66.2" y="973" width="18.8" height="69.79999999999995" fill="url(#gbar2)"/>
<rect x="98.03" y="973" width="18.8" height="69.79999999999995" fill="url(#gbar2)"/>
<rect x="129.86" y="973" width="18.8" height="69.79999999999995" fill="url(#gbar2)"/>
<rect x="161.69" y="973" width="18.8" height="69.79999999999995" fill="url(#gbar2)"/>
<rect x="193.52" y="973" width="18.8" height="69.79999999999995" fill="url(#gbar2)"/>
<rect x="225.35" y="973" width="18.8" height="69.79999999999995" fill="url(#gbar2)"/>
<rect x="257.18" y="973" width="18.8" height="69.79999999999995" fill="url(#gbar2)"/>
<rect x="289.01" y="973" width="18.8" height="69.79999999999995" fill="url(#gbar2)"/>
<rect x="320.84" y="973" width="18.8" height="69.79999999999995" fill="url(#gbar2)"/>
<rect x="352.67" y="973" width="18.8" height="69.79999999999995" fill="url(#gbar2)"/>
<rect x="384.5" y="973" width="18.8" height="69.79999999999995" fill="url(#gbar2)"/>
<rect x="416.33" y="973" width="18.8" height="69.79999999999995" fill="url(#gbar2)"/>
<rect x="448.16" y="973" width="18.8" height="69.79999999999995" fill="url(#gbar2)"/>
<rect x="479.99" y="973" width="18.8" height="69.79999999999995" fill="url(#gbar2)"/>
<rect x="511.82" y="973" width="18.8" height="69.79999999999995" fill="url(#gbar2)"/>
<rect x="543.65" y="973" width="18.8" height="69.79999999999995" fill="url(#gbar2)"/>
<rect x="543.65" y="972.2" width="18.8" height="1" fill="#73bf69"/>
<rect x="575.48" y="973" width="18.8" height="69.79999999999995" fill="url(#gbar2)"/>
<rect x="575.48" y="972.2" width="18.8" height="1" fill="#73bf69"/>
<rect x="607.31" y="973" width="18.8" height="69.79999999999995" fill="url(#gbar2)"/>
<rect x="607.31" y="972.2" width="18.8" height="1" fill="#73bf69"/>
<rect x="639.14" y="973" width="18.8" height="69.79999999999995" fill="url(#gbar2)"/>
<rect x="639.14" y="972.2" width="18.8" height="1" fill="#73bf69"/>
<rect x="670.97" y="973" width="18.8" height="69.79999999999995" fill="url(#gbar2)"/>
<rect x="670.97" y="972.2" width="18.8" height="1" fill="#73bf69"/>
<rect x="23" y="1077" width="14" height="4" fill="#56a64b" rx="2"/>
<text x="45.3" y="1081.9" font-size="12.5" fill="#30353b" textLength="25" lengthAdjust="spacing">total</text>
<rect x="80" y="1077" width="14" height="4" fill="#e0b400" rx="2"/>
<text x="102.3" y="1081.9" font-size="12.5" fill="#30353b" textLength="59.5" lengthAdjust="spacing">eu-west-3</text>
<rect x="172" y="1077" width="14" height="4" fill="#5794f2" rx="2"/>
<text x="194.3" y="1081.9" font-size="12.5" fill="#30353b" textLength="54" lengthAdjust="spacing">us-east-1</text>
<rect x="715.5" y="915.5" width="774" height="181" rx="2" fill="#fff" stroke="#e1e2e4" stroke-width="1"/>
<path d="M 730.71,924.10 C 733.93,924.97 734.85,927.59 734.21,930.47 C 734.95,930.73 735.87,930.38 736.42,929.25 C 738.63,931.43 739.28,935.09 737.71,937.53 C 736.60,939.28 734.67,939.80 732.55,939.80 C 729.33,939.80 726.38,938.06 726.10,934.57 C 725.92,931.95 727.02,929.77 728.31,928.29 C 728.50,929.33 728.77,930.21 729.42,930.73 C 729.60,928.29 731.26,926.54 730.71,924.10 Z" fill="url(#gfire)"/>
<path d="M 733.29,929.86 C 732.92,931.95 734.95,933.69 734.95,936.49 C 734.95,938.23 733.84,938.93 732.55,938.93 C 730.89,938.93 729.79,938.06 729.97,936.14 C 730.15,935.44 730.71,935.09 731.26,935.44 C 730.71,933.69 732.18,931.08 733.29,929.86 Z" fill="url(#gflame)"/>
<text x="745.5" y="937" font-size="15" fill="#24292e" textLength="426" lengthAdjust="spacing" stroke="#24292e" stroke-width="0.2">GWP (Embodied) - by region (Kg Co2 eq) - projected for 1 year</text>
<path d="M1194.10 927.40 L1191.10 927.40 Q1189.70 927.40 1189.70 928.80 L1189.70 937.40 Q1189.70 938.80 1191.10 938.80 L1199.70 938.80 Q1201.10 938.80 1201.10 937.40 L1201.10 934.10" fill="none" stroke="#6e7175" stroke-width="1.5" stroke-linecap="round"/>
<path d="M1197.30 926.30 L1201.90 926.30 L1201.90 930.90 M1201.90 926.30 L1194.90 933.30" fill="none" stroke="#6e7175" stroke-width="1.5" stroke-linecap="round" stroke-linejoin="round"/>
<text x="724.3" y="970.0" font-size="13" fill="#24292e" textLength="30.5" lengthAdjust="spacing">Total</text>
<rect x="724" y="975" width="10" height="23" rx="2.5" fill="url(#glit)"/>
<rect x="736" y="975" width="10" height="23" rx="2.5" fill="url(#glit)"/>
<rect x="748" y="975" width="10" height="23" rx="2.5" fill="url(#glit)"/>
<rect x="760" y="975" width="10" height="23" rx="2.5" fill="url(#glit)"/>
<rect x="772" y="975" width="10" height="23" rx="2.5" fill="url(#glit)"/>
<rect x="784" y="975" width="10" height="23" rx="2.5" fill="url(#glit)"/>
<rect x="796" y="975" width="10" height="23" rx="2.5" fill="url(#glit)"/>
<rect x="808" y="975" width="10" height="23" rx="2.5" fill="url(#glit)"/>
<rect x="820" y="975" width="10" height="23" rx="2.5" fill="url(#glit)"/>
<rect x="832" y="975" width="10" height="23" rx="2.5" fill="url(#glit)"/>
<rect x="844" y="975" width="10" height="23" rx="2.5" fill="url(#glit)"/>
<rect x="856" y="975" width="10" height="23" rx="2.5" fill="url(#glit)"/>
<rect x="868" y="975" width="10" height="23" rx="2.5" fill="url(#glit)"/>
<rect x="880" y="975" width="10" height="23" rx="2.5" fill="url(#glit)"/>
<rect x="892" y="975" width="10" height="23" rx="2.5" fill="url(#glit)"/>
<rect x="904" y="975" width="10" height="23" rx="2.5" fill="url(#glit)"/>
<rect x="916" y="975" width="10" height="23" rx="2.5" fill="url(#glit)"/>
<rect x="928" y="975" width="10" height="23" rx="2.5" fill="url(#glit)"/>
<rect x="940" y="975" width="10" height="23" rx="2.5" fill="url(#glit)"/>
<rect x="952" y="975" width="10" height="23" rx="2.5" fill="url(#glit)"/>
<rect x="964" y="975" width="10" height="23" rx="2.5" fill="url(#glit)"/>
<rect x="976" y="975" width="10" height="23" rx="2.5" fill="url(#glit)"/>
<rect x="988" y="975" width="10" height="23" rx="2.5" fill="url(#glit)"/>
<rect x="1000" y="975" width="10" height="23" rx="2.5" fill="url(#glit)"/>
<rect x="1012" y="975" width="10" height="23" rx="2.5" fill="url(#glit)"/>
<rect x="1024" y="975" width="10" height="23" rx="2.5" fill="url(#glit)"/>
<rect x="1036" y="975" width="10" height="23" rx="2.5" fill="url(#glit)"/>
<rect x="1048" y="975" width="10" height="23" rx="2.5" fill="url(#glit)"/>
<rect x="1060" y="975" width="10" height="23" rx="2.5" fill="url(#glit)"/>
<rect x="1072" y="975" width="10" height="23" rx="2.5" fill="url(#glit)"/>
<rect x="1084" y="975" width="10" height="23" rx="2.5" fill="url(#glit)"/>
<rect x="1096" y="975" width="10" height="23" rx="2.5" fill="url(#glit)"/>
<rect x="1108" y="975" width="10" height="23" rx="2.5" fill="url(#glit)"/>
<rect x="1120" y="975" width="10" height="23" rx="2.5" fill="url(#glit)"/>
<rect x="1132" y="975" width="10" height="23" rx="2.5" fill="url(#glit)"/>
<rect x="1144" y="975" width="10" height="23" rx="2.5" fill="url(#glit)"/>
<rect x="1156" y="975" width="10" height="23" rx="2.5" fill="url(#glit)"/>
<rect x="1168" y="975" width="10" height="23" rx="2.5" fill="url(#glit)"/>
<rect x="1180" y="975" width="10" height="23" rx="2.5" fill="url(#glit)"/>
<rect x="1192" y="975" width="10" height="23" rx="2.5" fill="url(#glit)"/>
<rect x="1204" y="975" width="10" height="23" rx="2.5" fill="url(#glit)"/>
<rect x="1216" y="975" width="10" height="23" rx="2.5" fill="url(#glit)"/>
<rect x="1228" y="975" width="10" height="23" rx="2.5" fill="url(#glit)"/>
<rect x="1240" y="975" width="10" height="23" rx="2.5" fill="url(#glit)"/>
<rect x="1252" y="975" width="10" height="23" rx="2.5" fill="url(#glit)"/>
<rect x="1264" y="975" width="10" height="23" rx="2.5" fill="url(#glit)"/>
<rect x="1276" y="975" width="10" height="23" rx="2.5" fill="url(#glit)"/>
<rect x="1288" y="975" width="10" height="23" rx="2.5" fill="url(#glit)"/>
<rect x="1300" y="975" width="10" height="23" rx="2.5" fill="url(#glit)"/>
<rect x="1312" y="975" width="10" height="23" rx="2.5" fill="url(#glit)"/>
<text x="1464.3" y="995.0" font-size="19" fill="#24292e" text-anchor="end" textLength="22.400000000000002" lengthAdjust="spacingAndGlyphs">kg</text>
<text x="1437.0" y="995.0" font-size="23.5" fill="#24292e" text-anchor="end" textLength="35" lengthAdjust="spacingAndGlyphs">110</text>
<text x="724.3" y="1014.5" font-size="13" fill="#24292e" textLength="63.3" lengthAdjust="spacing">eu-west-3</text>
<rect x="724" y="1020" width="10" height="23" rx="2.5" fill="url(#glit)"/>
<rect x="736" y="1020" width="10" height="23" rx="2.5" fill="#e0eddc"/>
<rect x="748" y="1020" width="10" height="23" rx="2.5" fill="#e0eddc"/>
<rect x="760" y="1020" width="10" height="23" rx="2.5" fill="#e0eddc"/>
<rect x="772" y="1020" width="10" height="23" rx="2.5" fill="#e0eddc"/>
<rect x="784" y="1020" width="10" height="23" rx="2.5" fill="#e0eddc"/>
<rect x="796" y="1020" width="10" height="23" rx="2.5" fill="#e0eddc"/>
<rect x="808" y="1020" width="10" height="23" rx="2.5" fill="#e0eddc"/>
<rect x="820" y="1020" width="10" height="23" rx="2.5" fill="#e0eddc"/>
<rect x="832" y="1020" width="10" height="23" rx="2.5" fill="#e0eddc"/>
<rect x="844" y="1020" width="10" height="23" rx="2.5" fill="#e0eddc"/>
<rect x="856" y="1020" width="10" height="23" rx="2.5" fill="#e0eddc"/>
<rect x="868" y="1020" width="10" height="23" rx="2.5" fill="#e0eddc"/>
<rect x="880" y="1020" width="10" height="23" rx="2.5" fill="#e0eddc"/>
<rect x="892" y="1020" width="10" height="23" rx="2.5" fill="#e0eddc"/>
<rect x="904" y="1020" width="10" height="23" rx="2.5" fill="#e0eddc"/>
<rect x="916" y="1020" width="10" height="23" rx="2.5" fill="#e0eddc"/>
<rect x="928" y="1020" width="10" height="23" rx="2.5" fill="#e0eddc"/>
<rect x="940" y="1020" width="10" height="23" rx="2.5" fill="#e0eddc"/>
<rect x="952" y="1020" width="10" height="23" rx="2.5" fill="#e0eddc"/>
<rect x="964" y="1020" width="10" height="23" rx="2.5" fill="#e0eddc"/>
<rect x="976" y="1020" width="10" height="23" rx="2.5" fill="#e0eddc"/>
<rect x="988" y="1020" width="10" height="23" rx="2.5" fill="#e0eddc"/>
<rect x="1000" y="1020" width="10" height="23" rx="2.5" fill="#e0eddc"/>
<rect x="1012" y="1020" width="10" height="23" rx="2.5" fill="#e0eddc"/>
<rect x="1024" y="1020" width="10" height="23" rx="2.5" fill="#e0eddc"/>
<rect x="1036" y="1020" width="10" height="23" rx="2.5" fill="#e0eddc"/>
<rect x="1048" y="1020" width="10" height="23" rx="2.5" fill="#e0eddc"/>
<rect x="1060" y="1020" width="10" height="23" rx="2.5" fill="#e0eddc"/>
<rect x="1072" y="1020" width="10" height="23" rx="2.5" fill="#e0eddc"/>
<rect x="1084" y="1020" width="10" height="23" rx="2.5" fill="#e0eddc"/>
<rect x="1096" y="1020" width="10" height="23" rx="2.5" fill="#e0eddc"/>
<rect x="1108" y="1020" width="10" height="23" rx="2.5" fill="#e0eddc"/>
<rect x="1120" y="1020" width="10" height="23" rx="2.5" fill="#e0eddc"/>
<rect x="1132" y="1020" width="10" height="23" rx="2.5" fill="#e0eddc"/>
<rect x="1144" y="1020" width="10" height="23" rx="2.5" fill="#e0eddc"/>
<rect x="1156" y="1020" width="10" height="23" rx="2.5" fill="#e0eddc"/>
<rect x="1168" y="1020" width="10" height="23" rx="2.5" fill="#e0eddc"/>
<rect x="1180" y="1020" width="10" height="23" rx="2.5" fill="#e0eddc"/>
<rect x="1192" y="1020" width="10" height="23" rx="2.5" fill="#e0eddc"/>
<rect x="1204" y="1020" width="10" height="23" rx="2.5" fill="#e0eddc"/>
<rect x="1216" y="1020" width="10" height="23" rx="2.5" fill="#e0eddc"/>
<rect x="1228" y="1020" width="10" height="23" rx="2.5" fill="#e0eddc"/>
<rect x="1240" y="1020" width="10" height="23" rx="2.5" fill="#e0eddc"/>
<rect x="1252" y="1020" width="10" height="23" rx="2.5" fill="#e0eddc"/>
<rect x="1264" y="1020" width="10" height="23" rx="2.5" fill="#e0eddc"/>
<rect x="1276" y="1020" width="10" height="23" rx="2.5" fill="#e0eddc"/>
<rect x="1288" y="1020" width="10" height="23" rx="2.5" fill="#e0eddc"/>
<rect x="1300" y="1020" width="10" height="23" rx="2.5" fill="#e0eddc"/>
<rect x="1312" y="1020" width="10" height="23" rx="2.5" fill="#e0eddc"/>
<text x="1464.3" y="1039.5" font-size="19" fill="#24292e" text-anchor="end" textLength="22.400000000000002" lengthAdjust="spacingAndGlyphs">kg</text>
<text x="1437.0" y="1039.5" font-size="23.5" fill="#24292e" text-anchor="end" textLength="50.3" lengthAdjust="spacingAndGlyphs">4.23</text>
<text x="724.3" y="1059.0" font-size="13" fill="#24292e" textLength="58" lengthAdjust="spacing">us-east-1</text>
<rect x="724" y="1065" width="10" height="23" rx="2.5" fill="url(#glit)"/>
<rect x="736" y="1065" width="10" height="23" rx="2.5" fill="url(#glit)"/>
<rect x="748" y="1065" width="10" height="23" rx="2.5" fill="url(#glit)"/>
<rect x="760" y="1065" width="10" height="23" rx="2.5" fill="url(#glit)"/>
<rect x="772" y="1065" width="10" height="23" rx="2.5" fill="url(#glit)"/>
<rect x="784" y="1065" width="10" height="23" rx="2.5" fill="url(#glit)"/>
<rect x="796" y="1065" width="10" height="23" rx="2.5" fill="url(#glit)"/>
<rect x="808" y="1065" width="10" height="23" rx="2.5" fill="url(#glit)"/>
<rect x="820" y="1065" width="10" height="23" rx="2.5" fill="url(#glit)"/>
<rect x="832" y="1065" width="10" height="23" rx="2.5" fill="url(#glit)"/>
<rect x="844" y="1065" width="10" height="23" rx="2.5" fill="url(#glit)"/>
<rect x="856" y="1065" width="10" height="23" rx="2.5" fill="url(#glit)"/>
<rect x="868" y="1065" width="10" height="23" rx="2.5" fill="url(#glit)"/>
<rect x="880" y="1065" width="10" height="23" rx="2.5" fill="url(#glit)"/>
<rect x="892" y="1065" width="10" height="23" rx="2.5" fill="url(#glit)"/>
<rect x="904" y="1065" width="10" height="23" rx="2.5" fill="url(#glit)"/>
<rect x="916" y="1065" width="10" height="23" rx="2.5" fill="url(#glit)"/>
<rect x="928" y="1065" width="10" height="23" rx="2.5" fill="url(#glit)"/>
<rect x="940" y="1065" width="10" height="23" rx="2.5" fill="url(#glit)"/>
<rect x="952" y="1065" width="10" height="23" rx="2.5" fill="url(#glit)"/>
<rect x="964" y="1065" width="10" height="23" rx="2.5" fill="url(#glit)"/>
<rect x="976" y="1065" width="10" height="23" rx="2.5" fill="url(#glit)"/>
<rect x="988" y="1065" width="10" height="23" rx="2.5" fill="url(#glit)"/>
<rect x="1000" y="1065" width="10" height="23" rx="2.5" fill="url(#glit)"/>
<rect x="1012" y="1065" width="10" height="23" rx="2.5" fill="url(#glit)"/>
<rect x="1024" y="1065" width="10" height="23" rx="2.5" fill="url(#glit)"/>
<rect x="1036" y="1065" width="10" height="23" rx="2.5" fill="url(#glit)"/>
<rect x="1048" y="1065" width="10" height="23" rx="2.5" fill="url(#glit)"/>
<rect x="1060" y="1065" width="10" height="23" rx="2.5" fill="url(#glit)"/>
<rect x="1072" y="1065" width="10" height="23" rx="2.5" fill="url(#glit)"/>
<rect x="1084" y="1065" width="10" height="23" rx="2.5" fill="url(#glit)"/>
<rect x="1096" y="1065" width="10" height="23" rx="2.5" fill="url(#glit)"/>
<rect x="1108" y="1065" width="10" height="23" rx="2.5" fill="url(#glit)"/>
<rect x="1120" y="1065" width="10" height="23" rx="2.5" fill="url(#glit)"/>
<rect x="1132" y="1065" width="10" height="23" rx="2.5" fill="url(#glit)"/>
<rect x="1144" y="1065" width="10" height="23" rx="2.5" fill="url(#glit)"/>
<rect x="1156" y="1065" width="10" height="23" rx="2.5" fill="url(#glit)"/>
<rect x="1168" y="1065" width="10" height="23" rx="2.5" fill="url(#glit)"/>
<rect x="1180" y="1065" width="10" height="23" rx="2.5" fill="url(#glit)"/>
<rect x="1192" y="1065" width="10" height="23" rx="2.5" fill="url(#glit)"/>
<rect x="1204" y="1065" width="10" height="23" rx="2.5" fill="url(#glit)"/>
<rect x="1216" y="1065" width="10" height="23" rx="2.5" fill="url(#glit)"/>
<rect x="1228" y="1065" width="10" height="23" rx="2.5" fill="url(#glit)"/>
<rect x="1240" y="1065" width="10" height="23" rx="2.5" fill="url(#glit)"/>
<rect x="1252" y="1065" width="10" height="23" rx="2.5" fill="url(#glit)"/>
<rect x="1264" y="1065" width="10" height="23" rx="2.5" fill="url(#glit)"/>
<rect x="1276" y="1065" width="10" height="23" rx="2.5" fill="url(#glit)"/>
<rect x="1288" y="1065" width="10" height="23" rx="2.5" fill="url(#glit)"/>
<rect x="1300" y="1065" width="10" height="23" rx="2.5" fill="#e0eddc"/>
<rect x="1312" y="1065" width="10" height="23" rx="2.5" fill="#e0eddc"/>
<text x="1464.3" y="1084.0" font-size="19" fill="#24292e" text-anchor="end" textLength="22.400000000000002" lengthAdjust="spacingAndGlyphs">kg</text>
<text x="1437.0" y="1084.0" font-size="23.5" fill="#24292e" text-anchor="end" textLength="40" lengthAdjust="spacingAndGlyphs">106</text>
</svg>
</body></html>
